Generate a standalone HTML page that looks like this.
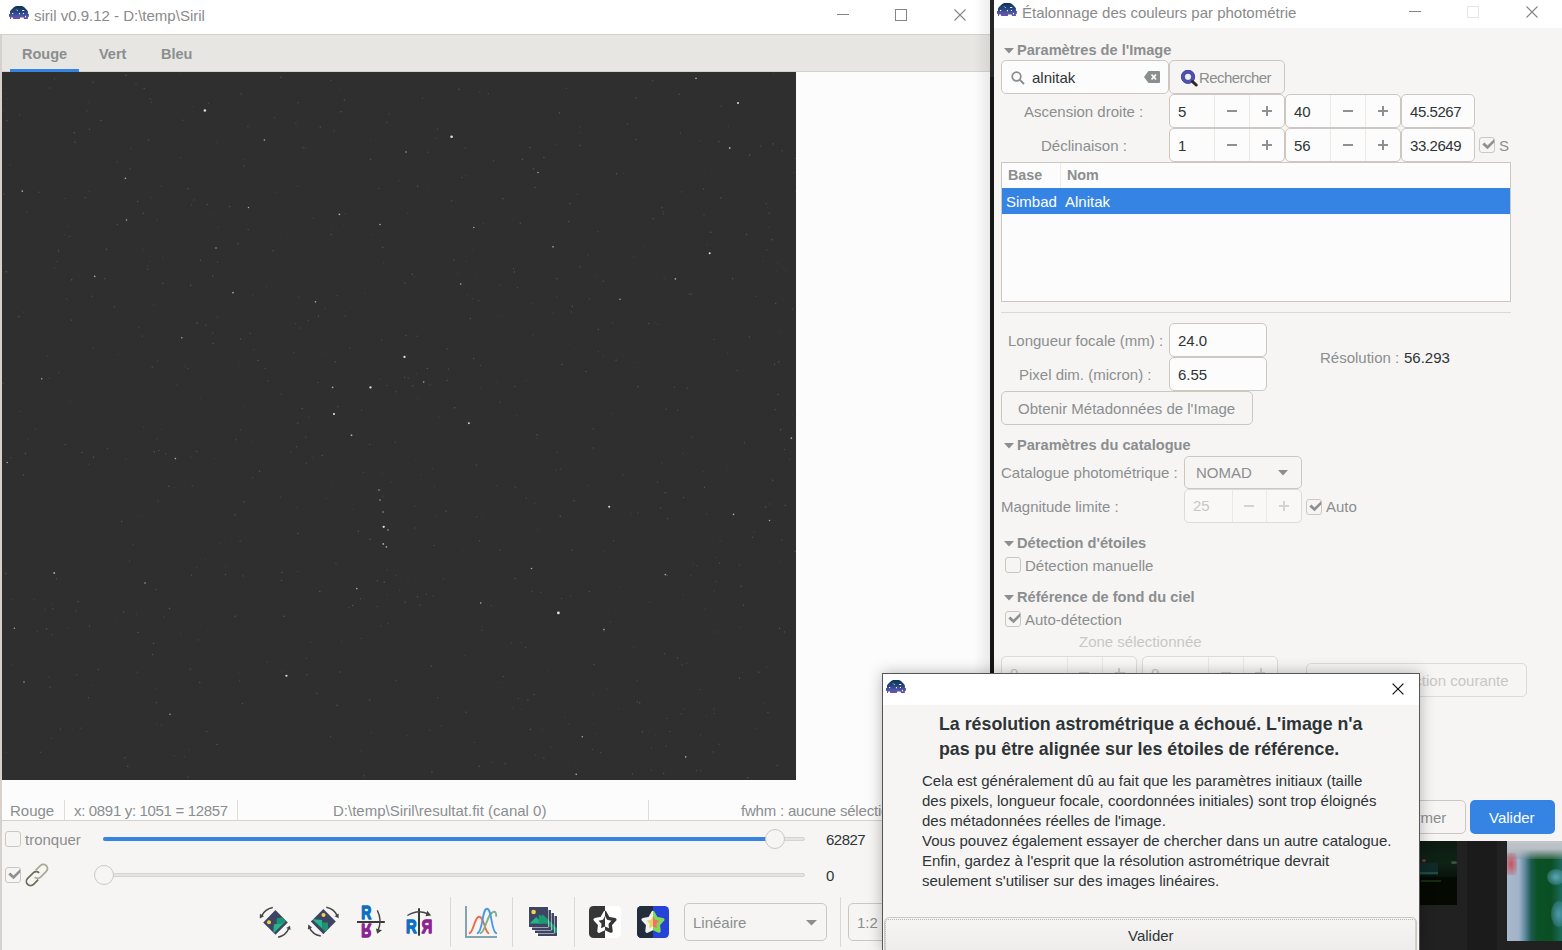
<!DOCTYPE html>
<html><head><meta charset="utf-8">
<style>
*{box-sizing:border-box;margin:0;padding:0}
html,body{width:1562px;height:950px;overflow:hidden;background:#202020;font-family:"Liberation Sans",sans-serif;font-size:15px;color:#2e3436}
.a{position:absolute}
.t{position:absolute;white-space:pre;line-height:1}
.g{color:#8b8e8f}
.b{font-weight:bold}
.ent{position:absolute;background:#fcfcfc;border:1px solid #cdc7c2;border-radius:5px}
.btn{position:absolute;background:#f6f5f4;border:1px solid #cdc7c2;border-radius:5px}
.vl{position:absolute;width:1px;background:#e4e1de}
.cb{position:absolute;width:16px;height:16px;border:1px solid #cdc7c2;border-radius:3px;background:#f6f5f4}
</style></head><body>
<svg width="0" height="0" style="position:absolute"><defs>
<linearGradient id="lg" x1="0" y1="0" x2="0" y2="1"><stop offset="0" stop-color="#073552"/><stop offset="0.45" stop-color="#27427f"/><stop offset="0.78" stop-color="#4a59a8"/><stop offset="1" stop-color="#7a4aa6"/></linearGradient>
<symbol id="logo" viewBox="0 0 20 14"><path d="M7.2 0.9H13L15 2.1L17.5 4.5L18.9 6.3V8.8L19.9 9.2V11.8L18.9 12V13.9H15L14.6 12.6H11L10.9 13.9H4.2L3.9 12.6H2.1L2 13.9H1V12L0 11.8V9.2L1 8.8V6.3L2.5 4.5L5.1 2.1Z" fill="url(#lg)"/>
<path d="M7.3 4.6Q7.9 5.5 8.6 5.6" stroke="#fff" stroke-width="0.9" fill="none"/><rect x="13.2" y="5" width="2" height="1" fill="#fff"/><rect x="3" y="8" width="1.2" height="1.1" fill="#fff"/><rect x="9.9" y="8" width="1" height="1.3" fill="#fff"/><rect x="13.9" y="8" width="1.1" height="1" fill="#fff"/><ellipse cx="16.5" cy="11.6" rx="0.55" ry="0.9" fill="#fff"/></symbol>
</defs></svg>

<!-- MAIN WINDOW -->
<div id="main" class="a" style="left:0;top:0;width:990px;height:950px;background:#f6f5f4;overflow:hidden">
  <div class="a" style="left:0;top:0;width:990px;height:34px;background:#fff"></div>
  <div class="a" style="left:0;top:34px;width:990px;height:1px;background:#d6d1cd"></div>
  <div class="a" style="left:0;top:35px;width:2px;height:915px;background:#d6d1cd"></div>
  <svg class="a" style="left:9px;top:5px" width="20" height="14"><use href="#logo"/></svg>
  <div class="t g" style="left:34px;top:8px;font-size:15px;color:#8a8a8a">siril v0.9.12 - D:\temp\Siril</div>
  <!-- window controls -->
  <div class="a" style="left:837px;top:14px;width:12px;height:1px;background:#858585"></div>
  <div class="a" style="left:895px;top:9px;width:12px;height:12px;border:1px solid #858585"></div>
  <svg class="a" style="left:954px;top:9px" width="12" height="12"><path d="M0.5 0.5L11.5 11.5M11.5 0.5L0.5 11.5" stroke="#858585" stroke-width="1.1"/></svg>
  <!-- tab bar -->
  <div class="a" style="left:2px;top:35px;width:988px;height:37px;background:#e8e6e3"></div>
  <div class="t b g" style="left:22px;top:47px;font-size:14.5px">Rouge</div>
  <div class="t b g" style="left:99px;top:47px;font-size:14.5px">Vert</div>
  <div class="t b g" style="left:161px;top:47px;font-size:14.5px">Bleu</div>
  <div class="a" style="left:2px;top:71px;width:988px;height:1px;background:#d6d1cd"></div>
  <div class="a" style="left:10px;top:69px;width:69px;height:3px;background:#3584e4"></div>
  <!-- image area -->
  <div class="a" style="left:2px;top:72px;width:988px;height:748px;background:#fcfcfc"></div>
  <div id="img" class="a" style="left:2px;top:72px;width:794px;height:708px;background:#2f2f2f"></div>
  <svg class="a" style="left:2px;top:72px" width="794" height="708"><circle cx="188.9" cy="385.3" r="0.7" fill="#fff" opacity="0.11"/><circle cx="479.5" cy="443.0" r="0.7" fill="#fff" opacity="0.06"/><circle cx="10.5" cy="592.9" r="0.7" fill="#fff" opacity="0.09"/><circle cx="186.1" cy="704.9" r="0.7" fill="#fff" opacity="0.13"/><circle cx="664.2" cy="337.3" r="0.7" fill="#fff" opacity="0.15"/><circle cx="119.6" cy="449.5" r="0.7" fill="#fff" opacity="0.19"/><circle cx="415.4" cy="524.8" r="0.7" fill="#fff" opacity="0.16"/><circle cx="50.8" cy="536.8" r="0.7" fill="#fff" opacity="0.14"/><circle cx="239.2" cy="22.0" r="0.7" fill="#fff" opacity="0.19"/><circle cx="375.4" cy="508.9" r="0.7" fill="#fff" opacity="0.19"/><circle cx="567.0" cy="652.1" r="0.7" fill="#fff" opacity="0.11"/><circle cx="635.9" cy="314.8" r="0.7" fill="#fff" opacity="0.20"/><circle cx="697.8" cy="69.0" r="0.7" fill="#fff" opacity="0.07"/><circle cx="172.3" cy="683.6" r="0.7" fill="#fff" opacity="0.12"/><circle cx="497.6" cy="213.1" r="0.7" fill="#fff" opacity="0.13"/><circle cx="306.4" cy="248.4" r="0.7" fill="#fff" opacity="0.14"/><circle cx="463.9" cy="640.2" r="0.7" fill="#fff" opacity="0.16"/><circle cx="737.6" cy="606.3" r="0.7" fill="#fff" opacity="0.21"/><circle cx="533.0" cy="115.5" r="0.7" fill="#fff" opacity="0.19"/><circle cx="765.9" cy="640.5" r="0.7" fill="#fff" opacity="0.14"/><circle cx="566.8" cy="149.5" r="0.7" fill="#fff" opacity="0.18"/><circle cx="455.4" cy="201.7" r="0.7" fill="#fff" opacity="0.06"/><circle cx="678.0" cy="700.8" r="0.7" fill="#fff" opacity="0.06"/><circle cx="635.7" cy="290.6" r="0.7" fill="#fff" opacity="0.07"/><circle cx="233.3" cy="544.3" r="0.7" fill="#fff" opacity="0.19"/><circle cx="35.1" cy="435.1" r="0.7" fill="#fff" opacity="0.05"/><circle cx="570.4" cy="234.3" r="0.7" fill="#fff" opacity="0.19"/><circle cx="778.6" cy="357.8" r="0.7" fill="#fff" opacity="0.21"/><circle cx="245.9" cy="54.5" r="0.7" fill="#fff" opacity="0.14"/><circle cx="24.9" cy="139.7" r="0.7" fill="#fff" opacity="0.11"/><circle cx="484.7" cy="110.6" r="0.7" fill="#fff" opacity="0.05"/><circle cx="689.0" cy="222.2" r="0.7" fill="#fff" opacity="0.20"/><circle cx="711.9" cy="267.5" r="0.7" fill="#fff" opacity="0.12"/><circle cx="412.9" cy="455.9" r="0.7" fill="#fff" opacity="0.14"/><circle cx="444.1" cy="439.0" r="0.7" fill="#fff" opacity="0.20"/><circle cx="402.6" cy="305.3" r="0.7" fill="#fff" opacity="0.16"/><circle cx="188.7" cy="213.2" r="0.7" fill="#fff" opacity="0.20"/><circle cx="413.8" cy="388.3" r="0.7" fill="#fff" opacity="0.05"/><circle cx="329.7" cy="410.6" r="0.7" fill="#fff" opacity="0.05"/><circle cx="488.9" cy="447.6" r="0.7" fill="#fff" opacity="0.06"/><circle cx="498.1" cy="330.1" r="0.7" fill="#fff" opacity="0.16"/><circle cx="279.9" cy="500.5" r="0.7" fill="#fff" opacity="0.17"/><circle cx="17.6" cy="42.9" r="0.7" fill="#fff" opacity="0.16"/><circle cx="764.9" cy="177.8" r="0.7" fill="#fff" opacity="0.12"/><circle cx="470.6" cy="226.6" r="0.7" fill="#fff" opacity="0.11"/><circle cx="248.3" cy="261.4" r="0.7" fill="#fff" opacity="0.14"/><circle cx="238.5" cy="267.0" r="0.7" fill="#fff" opacity="0.17"/><circle cx="21.4" cy="403.0" r="0.7" fill="#fff" opacity="0.17"/><circle cx="246.2" cy="157.6" r="0.7" fill="#fff" opacity="0.18"/><circle cx="189.5" cy="132.7" r="0.7" fill="#fff" opacity="0.12"/><circle cx="554.3" cy="72.1" r="0.7" fill="#fff" opacity="0.10"/><circle cx="265.0" cy="590.1" r="0.7" fill="#fff" opacity="0.12"/><circle cx="679.3" cy="119.9" r="0.7" fill="#fff" opacity="0.10"/><circle cx="516.3" cy="626.5" r="0.7" fill="#fff" opacity="0.12"/><circle cx="178.7" cy="85.6" r="0.7" fill="#fff" opacity="0.13"/><circle cx="151.5" cy="571.2" r="0.7" fill="#fff" opacity="0.19"/><circle cx="145.8" cy="197.2" r="0.7" fill="#fff" opacity="0.18"/><circle cx="509.7" cy="570.8" r="0.7" fill="#fff" opacity="0.10"/><circle cx="103.0" cy="206.7" r="0.7" fill="#fff" opacity="0.17"/><circle cx="215.3" cy="245.2" r="0.7" fill="#fff" opacity="0.11"/><circle cx="333.3" cy="289.9" r="0.7" fill="#fff" opacity="0.20"/><circle cx="123.9" cy="3.3" r="0.7" fill="#fff" opacity="0.20"/><circle cx="698.7" cy="698.7" r="0.7" fill="#fff" opacity="0.12"/><circle cx="754.4" cy="656.6" r="0.7" fill="#fff" opacity="0.08"/><circle cx="591.9" cy="592.4" r="0.7" fill="#fff" opacity="0.16"/><circle cx="412.1" cy="204.6" r="0.7" fill="#fff" opacity="0.10"/><circle cx="180.6" cy="48.2" r="0.7" fill="#fff" opacity="0.14"/><circle cx="227.9" cy="573.6" r="0.7" fill="#fff" opacity="0.05"/><circle cx="717.5" cy="491.1" r="0.7" fill="#fff" opacity="0.20"/><circle cx="711.9" cy="637.0" r="0.7" fill="#fff" opacity="0.14"/><circle cx="10.4" cy="527.7" r="0.7" fill="#fff" opacity="0.08"/><circle cx="238.1" cy="469.3" r="0.7" fill="#fff" opacity="0.13"/><circle cx="328.5" cy="664.8" r="0.7" fill="#fff" opacity="0.15"/><circle cx="271.0" cy="178.8" r="0.7" fill="#fff" opacity="0.19"/><circle cx="378.9" cy="553.9" r="0.7" fill="#fff" opacity="0.10"/><circle cx="156.7" cy="378.5" r="0.7" fill="#fff" opacity="0.18"/><circle cx="136.0" cy="560.5" r="0.7" fill="#fff" opacity="0.20"/><circle cx="640.0" cy="583.0" r="0.7" fill="#fff" opacity="0.05"/><circle cx="499.1" cy="610.7" r="0.7" fill="#fff" opacity="0.05"/><circle cx="215.5" cy="190.2" r="0.7" fill="#fff" opacity="0.13"/><circle cx="335.8" cy="334.8" r="0.7" fill="#fff" opacity="0.17"/><circle cx="1.4" cy="38.8" r="0.7" fill="#fff" opacity="0.07"/><circle cx="99.0" cy="48.4" r="0.7" fill="#fff" opacity="0.20"/><circle cx="678.4" cy="61.0" r="0.7" fill="#fff" opacity="0.13"/><circle cx="250.8" cy="222.7" r="0.7" fill="#fff" opacity="0.10"/><circle cx="513.6" cy="415.3" r="0.7" fill="#fff" opacity="0.11"/><circle cx="151.7" cy="232.8" r="0.7" fill="#fff" opacity="0.07"/><circle cx="441.1" cy="507.0" r="0.7" fill="#fff" opacity="0.11"/><circle cx="63.4" cy="126.4" r="0.7" fill="#fff" opacity="0.11"/><circle cx="479.9" cy="554.1" r="0.7" fill="#fff" opacity="0.11"/><circle cx="636.1" cy="441.0" r="0.7" fill="#fff" opacity="0.12"/><circle cx="295.7" cy="351.3" r="0.7" fill="#fff" opacity="0.16"/><circle cx="333.9" cy="491.4" r="0.7" fill="#fff" opacity="0.12"/><circle cx="194.6" cy="379.4" r="0.7" fill="#fff" opacity="0.16"/><circle cx="56.8" cy="300.8" r="0.7" fill="#fff" opacity="0.11"/><circle cx="698.5" cy="663.0" r="0.7" fill="#fff" opacity="0.11"/><circle cx="712.9" cy="560.0" r="0.7" fill="#fff" opacity="0.09"/><circle cx="368.5" cy="87.2" r="0.7" fill="#fff" opacity="0.18"/><circle cx="525.9" cy="628.2" r="0.7" fill="#fff" opacity="0.17"/><circle cx="530.0" cy="519.5" r="0.7" fill="#fff" opacity="0.14"/><circle cx="81.9" cy="416.1" r="0.7" fill="#fff" opacity="0.05"/><circle cx="114.0" cy="548.2" r="0.7" fill="#fff" opacity="0.05"/><circle cx="72.9" cy="70.3" r="0.7" fill="#fff" opacity="0.19"/><circle cx="142.2" cy="16.6" r="0.7" fill="#fff" opacity="0.19"/><circle cx="96.3" cy="597.5" r="0.7" fill="#fff" opacity="0.16"/><circle cx="663.9" cy="674.3" r="0.7" fill="#fff" opacity="0.14"/><circle cx="634.2" cy="25.7" r="0.7" fill="#fff" opacity="0.17"/><circle cx="406.0" cy="506.3" r="0.7" fill="#fff" opacity="0.07"/><circle cx="594.7" cy="661.7" r="0.7" fill="#fff" opacity="0.06"/><circle cx="257.5" cy="399.3" r="0.7" fill="#fff" opacity="0.18"/><circle cx="192.2" cy="127.3" r="0.7" fill="#fff" opacity="0.09"/><circle cx="489.1" cy="533.5" r="0.7" fill="#fff" opacity="0.11"/><circle cx="291.8" cy="280.8" r="0.7" fill="#fff" opacity="0.10"/><circle cx="332.1" cy="58.9" r="0.7" fill="#fff" opacity="0.13"/><circle cx="772.6" cy="292.3" r="0.7" fill="#fff" opacity="0.17"/><circle cx="127.5" cy="489.1" r="0.7" fill="#fff" opacity="0.17"/><circle cx="535.0" cy="366.1" r="0.7" fill="#fff" opacity="0.13"/><circle cx="510.5" cy="635.4" r="0.7" fill="#fff" opacity="0.07"/><circle cx="76.1" cy="529.7" r="0.7" fill="#fff" opacity="0.20"/><circle cx="410.7" cy="313.7" r="0.7" fill="#fff" opacity="0.16"/><circle cx="147.8" cy="189.3" r="0.7" fill="#fff" opacity="0.08"/><circle cx="465.0" cy="222.9" r="0.7" fill="#fff" opacity="0.08"/><circle cx="548.8" cy="675.0" r="0.7" fill="#fff" opacity="0.10"/><circle cx="560.0" cy="292.5" r="0.7" fill="#fff" opacity="0.19"/><circle cx="464.2" cy="189.2" r="0.7" fill="#fff" opacity="0.08"/><circle cx="18.4" cy="339.5" r="0.7" fill="#fff" opacity="0.11"/><circle cx="136.8" cy="255.2" r="0.7" fill="#fff" opacity="0.10"/><circle cx="614.7" cy="101.7" r="0.7" fill="#fff" opacity="0.21"/><circle cx="380.8" cy="424.1" r="0.7" fill="#fff" opacity="0.13"/><circle cx="662.7" cy="581.7" r="0.7" fill="#fff" opacity="0.14"/><circle cx="382.2" cy="510.3" r="0.7" fill="#fff" opacity="0.19"/><circle cx="317.8" cy="519.4" r="0.7" fill="#fff" opacity="0.20"/><circle cx="371.1" cy="162.6" r="0.7" fill="#fff" opacity="0.08"/><circle cx="569.8" cy="478.1" r="0.7" fill="#fff" opacity="0.20"/><circle cx="678.0" cy="171.4" r="0.7" fill="#fff" opacity="0.08"/><circle cx="205.3" cy="132.5" r="0.7" fill="#fff" opacity="0.16"/><circle cx="681.7" cy="637.0" r="0.7" fill="#fff" opacity="0.09"/><circle cx="686.9" cy="221.9" r="0.7" fill="#fff" opacity="0.11"/><circle cx="578.8" cy="60.8" r="0.7" fill="#fff" opacity="0.07"/><circle cx="662.1" cy="206.6" r="0.7" fill="#fff" opacity="0.11"/><circle cx="460.8" cy="478.3" r="0.7" fill="#fff" opacity="0.05"/><circle cx="265.8" cy="308.8" r="0.7" fill="#fff" opacity="0.13"/><circle cx="166.8" cy="414.3" r="0.7" fill="#fff" opacity="0.20"/><circle cx="310.4" cy="385.4" r="0.7" fill="#fff" opacity="0.07"/><circle cx="218.2" cy="471.1" r="0.7" fill="#fff" opacity="0.07"/><circle cx="704.4" cy="643.4" r="0.7" fill="#fff" opacity="0.07"/><circle cx="747.4" cy="265.0" r="0.7" fill="#fff" opacity="0.17"/><circle cx="601.3" cy="209.2" r="0.7" fill="#fff" opacity="0.16"/><circle cx="519.3" cy="570.7" r="0.7" fill="#fff" opacity="0.09"/><circle cx="598.8" cy="680.6" r="0.7" fill="#fff" opacity="0.16"/><circle cx="425.7" cy="80.2" r="0.7" fill="#fff" opacity="0.13"/><circle cx="279.6" cy="508.4" r="0.7" fill="#fff" opacity="0.16"/><circle cx="449.7" cy="128.8" r="0.7" fill="#fff" opacity="0.15"/><circle cx="500.9" cy="126.8" r="0.7" fill="#fff" opacity="0.19"/><circle cx="520.4" cy="87.2" r="0.7" fill="#fff" opacity="0.20"/><circle cx="112.3" cy="234.7" r="0.7" fill="#fff" opacity="0.16"/><circle cx="474.4" cy="392.9" r="0.7" fill="#fff" opacity="0.15"/><circle cx="363.4" cy="221.2" r="0.7" fill="#fff" opacity="0.08"/><circle cx="54.5" cy="506.8" r="0.7" fill="#fff" opacity="0.17"/><circle cx="431.2" cy="523.7" r="0.7" fill="#fff" opacity="0.11"/><circle cx="211.1" cy="271.4" r="0.7" fill="#fff" opacity="0.19"/><circle cx="33.4" cy="357.3" r="0.7" fill="#fff" opacity="0.09"/><circle cx="610.5" cy="250.7" r="0.7" fill="#fff" opacity="0.10"/><circle cx="320.3" cy="383.4" r="0.7" fill="#fff" opacity="0.17"/><circle cx="280.2" cy="599.6" r="0.7" fill="#fff" opacity="0.07"/><circle cx="214.8" cy="70.6" r="0.7" fill="#fff" opacity="0.07"/><circle cx="618.5" cy="514.9" r="0.7" fill="#fff" opacity="0.08"/><circle cx="150.2" cy="295.0" r="0.7" fill="#fff" opacity="0.17"/><circle cx="647.7" cy="530.1" r="0.7" fill="#fff" opacity="0.14"/><circle cx="116.3" cy="282.1" r="0.7" fill="#fff" opacity="0.08"/><circle cx="418.9" cy="402.4" r="0.7" fill="#fff" opacity="0.08"/><circle cx="198.6" cy="553.4" r="0.7" fill="#fff" opacity="0.05"/><circle cx="637.7" cy="631.0" r="0.7" fill="#fff" opacity="0.20"/><circle cx="304.2" cy="391.2" r="0.7" fill="#fff" opacity="0.14"/><circle cx="503.1" cy="691.7" r="0.7" fill="#fff" opacity="0.16"/><circle cx="237.7" cy="608.9" r="0.7" fill="#fff" opacity="0.13"/><circle cx="477.5" cy="514.6" r="0.7" fill="#fff" opacity="0.05"/><circle cx="611.7" cy="468.7" r="0.7" fill="#fff" opacity="0.13"/><circle cx="415.8" cy="326.1" r="0.7" fill="#fff" opacity="0.08"/><circle cx="420.5" cy="26.2" r="0.7" fill="#fff" opacity="0.13"/><circle cx="512.9" cy="314.5" r="0.7" fill="#fff" opacity="0.14"/><circle cx="761.5" cy="631.6" r="0.7" fill="#fff" opacity="0.07"/><circle cx="629.1" cy="441.3" r="0.7" fill="#fff" opacity="0.05"/><circle cx="285.8" cy="165.3" r="0.7" fill="#fff" opacity="0.06"/><circle cx="427.9" cy="658.3" r="0.7" fill="#fff" opacity="0.10"/><circle cx="691.2" cy="491.8" r="0.7" fill="#fff" opacity="0.07"/><circle cx="681.5" cy="425.6" r="0.7" fill="#fff" opacity="0.20"/><circle cx="568.5" cy="523.7" r="0.7" fill="#fff" opacity="0.10"/><circle cx="640.5" cy="659.7" r="0.7" fill="#fff" opacity="0.19"/><circle cx="347.0" cy="535.8" r="0.7" fill="#fff" opacity="0.13"/><circle cx="86.6" cy="30.2" r="0.7" fill="#fff" opacity="0.06"/><circle cx="159.0" cy="113.9" r="0.7" fill="#fff" opacity="0.13"/><circle cx="555.2" cy="380.5" r="0.7" fill="#fff" opacity="0.11"/><circle cx="515.5" cy="215.7" r="0.7" fill="#fff" opacity="0.13"/><circle cx="601.1" cy="284.2" r="0.7" fill="#fff" opacity="0.08"/><circle cx="714.1" cy="509.5" r="0.7" fill="#fff" opacity="0.11"/><circle cx="294.6" cy="374.8" r="0.7" fill="#fff" opacity="0.14"/><circle cx="177.7" cy="1.9" r="0.7" fill="#fff" opacity="0.08"/><circle cx="621.8" cy="101.6" r="0.7" fill="#fff" opacity="0.12"/><circle cx="155.1" cy="148.2" r="0.7" fill="#fff" opacity="0.08"/><circle cx="320.6" cy="119.1" r="0.7" fill="#fff" opacity="0.05"/><circle cx="87.4" cy="119.1" r="0.7" fill="#fff" opacity="0.13"/><circle cx="47.4" cy="15.9" r="0.7" fill="#fff" opacity="0.12"/><circle cx="323.7" cy="498.0" r="0.7" fill="#fff" opacity="0.05"/><circle cx="320.2" cy="280.8" r="0.7" fill="#fff" opacity="0.05"/><circle cx="766.6" cy="155.0" r="0.7" fill="#fff" opacity="0.07"/><circle cx="376.8" cy="116.6" r="0.7" fill="#fff" opacity="0.15"/><circle cx="275.0" cy="87.8" r="0.7" fill="#fff" opacity="0.05"/><circle cx="577.8" cy="194.8" r="0.7" fill="#fff" opacity="0.17"/><circle cx="369.5" cy="660.5" r="0.7" fill="#fff" opacity="0.10"/><circle cx="198.5" cy="188.2" r="0.7" fill="#fff" opacity="0.18"/><circle cx="499.5" cy="244.1" r="0.7" fill="#fff" opacity="0.07"/><circle cx="541.8" cy="686.2" r="0.7" fill="#fff" opacity="0.14"/><circle cx="2.9" cy="21.5" r="0.7" fill="#fff" opacity="0.06"/><circle cx="135.2" cy="25.9" r="0.7" fill="#fff" opacity="0.05"/><circle cx="519.5" cy="637.4" r="0.7" fill="#fff" opacity="0.08"/><circle cx="773.2" cy="337.6" r="0.7" fill="#fff" opacity="0.18"/><circle cx="728.4" cy="665.6" r="0.7" fill="#fff" opacity="0.05"/><circle cx="242.0" cy="429.7" r="0.7" fill="#fff" opacity="0.20"/><circle cx="69.7" cy="207.8" r="0.7" fill="#fff" opacity="0.19"/><circle cx="91.1" cy="276.0" r="0.7" fill="#fff" opacity="0.10"/><circle cx="540.0" cy="657.4" r="0.7" fill="#fff" opacity="0.08"/><circle cx="587.4" cy="519.6" r="0.7" fill="#fff" opacity="0.19"/><circle cx="439.3" cy="653.8" r="0.7" fill="#fff" opacity="0.11"/><circle cx="329.3" cy="162.4" r="0.7" fill="#fff" opacity="0.17"/><circle cx="381.6" cy="190.8" r="0.7" fill="#fff" opacity="0.08"/><circle cx="572.2" cy="428.8" r="0.7" fill="#fff" opacity="0.16"/><circle cx="307.1" cy="344.9" r="0.7" fill="#fff" opacity="0.07"/><circle cx="564.3" cy="16.3" r="0.7" fill="#fff" opacity="0.13"/><circle cx="602.2" cy="479.6" r="0.7" fill="#fff" opacity="0.07"/><circle cx="188.3" cy="597.3" r="0.7" fill="#fff" opacity="0.15"/><circle cx="697.6" cy="617.6" r="0.7" fill="#fff" opacity="0.12"/><circle cx="712.1" cy="518.9" r="0.7" fill="#fff" opacity="0.10"/><circle cx="293.9" cy="51.0" r="0.7" fill="#fff" opacity="0.11"/><circle cx="758.8" cy="74.3" r="0.7" fill="#fff" opacity="0.14"/><circle cx="87.4" cy="57.3" r="0.7" fill="#fff" opacity="0.16"/><circle cx="191.1" cy="34.6" r="0.7" fill="#fff" opacity="0.07"/><circle cx="511.8" cy="414.6" r="0.7" fill="#fff" opacity="0.05"/><circle cx="182.6" cy="684.8" r="0.7" fill="#fff" opacity="0.08"/><circle cx="446.6" cy="297.1" r="0.7" fill="#fff" opacity="0.17"/><circle cx="479.9" cy="558.4" r="0.7" fill="#fff" opacity="0.13"/><circle cx="149.4" cy="125.7" r="0.7" fill="#fff" opacity="0.06"/><circle cx="655.5" cy="79.7" r="0.7" fill="#fff" opacity="0.05"/><circle cx="767.3" cy="141.1" r="0.7" fill="#fff" opacity="0.19"/><circle cx="68.1" cy="329.4" r="0.7" fill="#fff" opacity="0.08"/><circle cx="658.6" cy="435.7" r="0.7" fill="#fff" opacity="0.15"/><circle cx="604.6" cy="617.2" r="0.7" fill="#fff" opacity="0.10"/><circle cx="478.9" cy="315.5" r="0.7" fill="#fff" opacity="0.07"/><circle cx="663.3" cy="420.8" r="0.7" fill="#fff" opacity="0.18"/><circle cx="163.6" cy="381.7" r="0.7" fill="#fff" opacity="0.13"/><circle cx="578.0" cy="54.7" r="0.7" fill="#fff" opacity="0.10"/><circle cx="384.7" cy="50.6" r="0.7" fill="#fff" opacity="0.14"/><circle cx="583.8" cy="299.4" r="0.7" fill="#fff" opacity="0.16"/><circle cx="481.1" cy="151.6" r="0.7" fill="#fff" opacity="0.10"/><circle cx="790.6" cy="237.3" r="0.7" fill="#fff" opacity="0.12"/><circle cx="66.8" cy="154.3" r="0.7" fill="#fff" opacity="0.07"/><circle cx="739.2" cy="514.3" r="0.7" fill="#fff" opacity="0.19"/><circle cx="783.3" cy="433.4" r="0.7" fill="#fff" opacity="0.20"/><circle cx="425.4" cy="296.5" r="0.7" fill="#fff" opacity="0.20"/><circle cx="717.1" cy="672.3" r="0.7" fill="#fff" opacity="0.13"/><circle cx="614.1" cy="288.1" r="0.7" fill="#fff" opacity="0.21"/><circle cx="730.7" cy="206.8" r="0.7" fill="#fff" opacity="0.20"/><circle cx="146.6" cy="67.9" r="0.7" fill="#fff" opacity="0.17"/><circle cx="233.7" cy="367.8" r="0.7" fill="#fff" opacity="0.15"/><circle cx="32.2" cy="527.6" r="0.7" fill="#fff" opacity="0.09"/><circle cx="343.3" cy="244.1" r="0.7" fill="#fff" opacity="0.17"/><circle cx="593.0" cy="203.4" r="0.7" fill="#fff" opacity="0.07"/><circle cx="237.7" cy="291.0" r="0.7" fill="#fff" opacity="0.06"/><circle cx="121.6" cy="540.0" r="0.7" fill="#fff" opacity="0.16"/><circle cx="775.3" cy="693.6" r="0.7" fill="#fff" opacity="0.19"/><circle cx="295.8" cy="114.2" r="0.7" fill="#fff" opacity="0.10"/><circle cx="367.7" cy="372.4" r="0.7" fill="#fff" opacity="0.14"/><circle cx="285.6" cy="603.7" r="0.7" fill="#fff" opacity="0.10"/><circle cx="367.7" cy="627.9" r="0.7" fill="#fff" opacity="0.18"/><circle cx="236.1" cy="171.8" r="0.7" fill="#fff" opacity="0.18"/><circle cx="8.0" cy="93.1" r="0.7" fill="#fff" opacity="0.13"/><circle cx="425.5" cy="117.3" r="0.7" fill="#fff" opacity="0.05"/><circle cx="161.9" cy="545.2" r="0.7" fill="#fff" opacity="0.13"/><circle cx="777.6" cy="556.2" r="0.7" fill="#fff" opacity="0.20"/><circle cx="27.9" cy="131.0" r="0.7" fill="#fff" opacity="0.05"/><circle cx="343.3" cy="239.5" r="0.7" fill="#fff" opacity="0.05"/><circle cx="433.5" cy="66.4" r="0.7" fill="#fff" opacity="0.10"/><circle cx="196.3" cy="567.9" r="0.7" fill="#fff" opacity="0.11"/><circle cx="206.7" cy="31.2" r="0.7" fill="#fff" opacity="0.12"/><circle cx="498.2" cy="478.1" r="0.7" fill="#fff" opacity="0.20"/><circle cx="642.0" cy="175.1" r="0.7" fill="#fff" opacity="0.07"/><circle cx="602.1" cy="559.0" r="0.7" fill="#fff" opacity="0.13"/><circle cx="659.8" cy="390.7" r="0.7" fill="#fff" opacity="0.10"/><circle cx="134.0" cy="12.1" r="0.7" fill="#fff" opacity="0.15"/><circle cx="712.2" cy="641.6" r="0.7" fill="#fff" opacity="0.13"/><circle cx="528.4" cy="657.5" r="0.7" fill="#fff" opacity="0.18"/><circle cx="478.5" cy="293.4" r="0.7" fill="#fff" opacity="0.13"/><circle cx="135.6" cy="129.5" r="0.7" fill="#fff" opacity="0.16"/><circle cx="787.7" cy="387.3" r="0.7" fill="#fff" opacity="0.11"/><circle cx="279.4" cy="322.1" r="0.7" fill="#fff" opacity="0.18"/><circle cx="359.3" cy="679.2" r="0.7" fill="#fff" opacity="0.07"/><circle cx="250.0" cy="369.6" r="0.7" fill="#fff" opacity="0.11"/><circle cx="675.7" cy="585.9" r="0.7" fill="#fff" opacity="0.20"/><circle cx="486.3" cy="21.7" r="0.7" fill="#fff" opacity="0.14"/><circle cx="436.5" cy="345.2" r="0.7" fill="#fff" opacity="0.10"/><circle cx="563.3" cy="645.4" r="0.7" fill="#fff" opacity="0.07"/><circle cx="530.9" cy="262.9" r="0.7" fill="#fff" opacity="0.13"/><circle cx="711.2" cy="679.9" r="0.7" fill="#fff" opacity="0.15"/><circle cx="154.9" cy="651.9" r="0.7" fill="#fff" opacity="0.08"/><circle cx="304.3" cy="586.3" r="0.7" fill="#fff" opacity="0.10"/><circle cx="215.1" cy="672.5" r="0.7" fill="#fff" opacity="0.20"/><circle cx="252.0" cy="277.9" r="0.7" fill="#fff" opacity="0.10"/><circle cx="104.4" cy="177.2" r="0.7" fill="#fff" opacity="0.20"/><circle cx="62.9" cy="162.7" r="0.7" fill="#fff" opacity="0.08"/><circle cx="63.1" cy="372.6" r="0.7" fill="#fff" opacity="0.17"/><circle cx="665.6" cy="446.8" r="0.7" fill="#fff" opacity="0.18"/><circle cx="4.3" cy="199.8" r="0.7" fill="#fff" opacity="0.20"/><circle cx="55.1" cy="189.5" r="0.7" fill="#fff" opacity="0.13"/><circle cx="212.7" cy="386.7" r="0.7" fill="#fff" opacity="0.05"/><circle cx="187.3" cy="678.0" r="0.7" fill="#fff" opacity="0.07"/><circle cx="719.0" cy="126.0" r="0.7" fill="#fff" opacity="0.21"/><circle cx="535.6" cy="458.0" r="0.7" fill="#fff" opacity="0.07"/><circle cx="43.3" cy="537.7" r="0.7" fill="#fff" opacity="0.08"/><circle cx="150.5" cy="582.5" r="0.7" fill="#fff" opacity="0.19"/><circle cx="38.7" cy="680.2" r="0.7" fill="#fff" opacity="0.13"/><circle cx="303.6" cy="75.8" r="0.7" fill="#fff" opacity="0.11"/><circle cx="784.1" cy="198.8" r="0.7" fill="#fff" opacity="0.07"/><circle cx="115.3" cy="89.9" r="0.7" fill="#fff" opacity="0.11"/><circle cx="726.5" cy="54.5" r="0.7" fill="#fff" opacity="0.08"/><circle cx="745.8" cy="705.8" r="0.7" fill="#fff" opacity="0.20"/><circle cx="195.3" cy="250.9" r="0.7" fill="#fff" opacity="0.20"/><circle cx="385.2" cy="498.0" r="0.7" fill="#fff" opacity="0.10"/><circle cx="16.9" cy="244.5" r="0.7" fill="#fff" opacity="0.17"/><circle cx="620.9" cy="402.8" r="0.7" fill="#fff" opacity="0.13"/><circle cx="427.3" cy="313.1" r="0.7" fill="#fff" opacity="0.13"/><circle cx="661.4" cy="141.9" r="0.7" fill="#fff" opacity="0.14"/><circle cx="740.6" cy="600.6" r="0.7" fill="#fff" opacity="0.08"/><circle cx="765.0" cy="594.8" r="0.7" fill="#fff" opacity="0.08"/><circle cx="211.1" cy="143.3" r="0.7" fill="#fff" opacity="0.05"/><circle cx="776.8" cy="289.8" r="0.7" fill="#fff" opacity="0.19"/><circle cx="91.0" cy="9.9" r="0.7" fill="#fff" opacity="0.19"/><circle cx="630.4" cy="702.0" r="0.7" fill="#fff" opacity="0.16"/><circle cx="417.0" cy="542.4" r="0.7" fill="#fff" opacity="0.06"/><circle cx="429.1" cy="312.4" r="0.7" fill="#fff" opacity="0.07"/><circle cx="476.7" cy="228.8" r="0.7" fill="#fff" opacity="0.13"/><circle cx="296.6" cy="225.2" r="0.7" fill="#fff" opacity="0.11"/><circle cx="477.2" cy="694.2" r="0.7" fill="#fff" opacity="0.20"/><circle cx="684.6" cy="591.3" r="0.7" fill="#fff" opacity="0.10"/><circle cx="775.5" cy="191.0" r="0.7" fill="#fff" opacity="0.07"/><circle cx="397.6" cy="518.4" r="0.7" fill="#fff" opacity="0.10"/><circle cx="512.4" cy="199.9" r="0.7" fill="#fff" opacity="0.20"/><circle cx="359.6" cy="338.3" r="0.7" fill="#fff" opacity="0.13"/><circle cx="694.7" cy="698.5" r="0.7" fill="#fff" opacity="0.13"/><circle cx="350.6" cy="437.4" r="0.7" fill="#fff" opacity="0.06"/><circle cx="337.8" cy="600.0" r="0.7" fill="#fff" opacity="0.17"/><circle cx="47.1" cy="605.0" r="0.7" fill="#fff" opacity="0.11"/><circle cx="779.1" cy="259.6" r="0.7" fill="#fff" opacity="0.08"/><circle cx="435.7" cy="625.8" r="0.7" fill="#fff" opacity="0.12"/><circle cx="688.8" cy="503.6" r="0.7" fill="#fff" opacity="0.11"/><circle cx="238.7" cy="357.8" r="0.7" fill="#fff" opacity="0.11"/><circle cx="295.8" cy="461.4" r="0.7" fill="#fff" opacity="0.19"/><circle cx="464.0" cy="103.5" r="0.7" fill="#fff" opacity="0.08"/><circle cx="294.5" cy="435.2" r="0.7" fill="#fff" opacity="0.07"/><circle cx="64.8" cy="227.0" r="0.7" fill="#fff" opacity="0.10"/><circle cx="23.4" cy="381.5" r="0.7" fill="#fff" opacity="0.20"/><circle cx="424.3" cy="522.1" r="0.7" fill="#fff" opacity="0.18"/><circle cx="665.1" cy="646.4" r="0.7" fill="#fff" opacity="0.12"/><circle cx="541.9" cy="85.5" r="0.7" fill="#fff" opacity="0.19"/><circle cx="300.3" cy="336.5" r="0.7" fill="#fff" opacity="0.19"/><circle cx="227.7" cy="134.5" r="0.7" fill="#fff" opacity="0.18"/><circle cx="475.5" cy="60.1" r="0.7" fill="#fff" opacity="0.05"/><circle cx="278.9" cy="5.3" r="0.7" fill="#fff" opacity="0.18"/><circle cx="145.8" cy="194.1" r="0.7" fill="#fff" opacity="0.11"/><circle cx="406.3" cy="306.1" r="0.7" fill="#fff" opacity="0.15"/><circle cx="523.9" cy="308.8" r="0.7" fill="#fff" opacity="0.07"/><circle cx="777.4" cy="489.4" r="0.7" fill="#fff" opacity="0.06"/><circle cx="350.7" cy="533.5" r="0.7" fill="#fff" opacity="0.21"/><circle cx="52.4" cy="6.7" r="0.7" fill="#fff" opacity="0.13"/><circle cx="335.1" cy="633.2" r="0.7" fill="#fff" opacity="0.18"/><circle cx="263.3" cy="296.5" r="0.7" fill="#fff" opacity="0.14"/><circle cx="702.0" cy="143.0" r="0.7" fill="#fff" opacity="0.11"/><circle cx="70.2" cy="454.0" r="0.7" fill="#fff" opacity="0.05"/><circle cx="742.4" cy="370.8" r="0.7" fill="#fff" opacity="0.14"/><circle cx="67.7" cy="164.4" r="0.7" fill="#fff" opacity="0.13"/><circle cx="680.7" cy="381.6" r="0.7" fill="#fff" opacity="0.10"/><circle cx="779.8" cy="468.3" r="0.7" fill="#fff" opacity="0.13"/><circle cx="160.7" cy="211.4" r="0.7" fill="#fff" opacity="0.19"/><circle cx="105.5" cy="376.4" r="0.7" fill="#fff" opacity="0.15"/><circle cx="281.8" cy="544.2" r="0.7" fill="#fff" opacity="0.20"/><circle cx="680.9" cy="522.5" r="0.7" fill="#fff" opacity="0.08"/><circle cx="47.5" cy="306.4" r="0.7" fill="#fff" opacity="0.10"/><circle cx="154.0" cy="616.9" r="0.7" fill="#fff" opacity="0.08"/><circle cx="653.3" cy="663.9" r="0.7" fill="#fff" opacity="0.07"/><circle cx="725.4" cy="281.2" r="0.7" fill="#fff" opacity="0.08"/><circle cx="148.1" cy="26.7" r="0.7" fill="#fff" opacity="0.13"/><circle cx="305.2" cy="602.8" r="0.7" fill="#fff" opacity="0.18"/><circle cx="45.3" cy="284.1" r="0.7" fill="#fff" opacity="0.11"/><circle cx="141.0" cy="177.5" r="0.7" fill="#fff" opacity="0.09"/><circle cx="551.1" cy="240.9" r="0.7" fill="#fff" opacity="0.07"/><circle cx="175.0" cy="313.1" r="0.7" fill="#fff" opacity="0.14"/><circle cx="194.9" cy="495.3" r="0.7" fill="#fff" opacity="0.08"/><circle cx="532.6" cy="431.4" r="0.7" fill="#fff" opacity="0.08"/><circle cx="596.3" cy="279.1" r="0.7" fill="#fff" opacity="0.14"/><circle cx="474.6" cy="444.7" r="0.7" fill="#fff" opacity="0.12"/><circle cx="44.5" cy="557.0" r="0.7" fill="#fff" opacity="0.19"/><circle cx="389.2" cy="409.9" r="0.7" fill="#fff" opacity="0.09"/><circle cx="713.5" cy="485.5" r="0.7" fill="#fff" opacity="0.08"/><circle cx="649.1" cy="698.2" r="0.7" fill="#fff" opacity="0.10"/><circle cx="790.4" cy="342.1" r="0.7" fill="#fff" opacity="0.08"/><circle cx="569.2" cy="239.9" r="0.7" fill="#fff" opacity="0.17"/><circle cx="463.3" cy="76.2" r="0.7" fill="#fff" opacity="0.13"/><circle cx="675.6" cy="338.3" r="0.7" fill="#fff" opacity="0.14"/><circle cx="685.3" cy="316.2" r="0.7" fill="#fff" opacity="0.13"/><circle cx="462.8" cy="583.3" r="0.7" fill="#fff" opacity="0.08"/><circle cx="74.3" cy="538.9" r="0.7" fill="#fff" opacity="0.14"/><circle cx="240.4" cy="631.6" r="0.7" fill="#fff" opacity="0.19"/><circle cx="429.9" cy="699.8" r="0.7" fill="#fff" opacity="0.19"/><circle cx="594.0" cy="206.2" r="0.7" fill="#fff" opacity="0.05"/><circle cx="538.8" cy="520.5" r="0.7" fill="#fff" opacity="0.10"/><circle cx="380.1" cy="401.6" r="0.7" fill="#fff" opacity="0.09"/><circle cx="553.9" cy="398.3" r="0.7" fill="#fff" opacity="0.11"/><circle cx="87.0" cy="392.2" r="0.7" fill="#fff" opacity="0.10"/><circle cx="575.6" cy="122.2" r="0.7" fill="#fff" opacity="0.11"/><circle cx="155.8" cy="289.1" r="0.7" fill="#fff" opacity="0.14"/><circle cx="84.9" cy="38.8" r="0.7" fill="#fff" opacity="0.13"/><circle cx="160.0" cy="357.6" r="0.7" fill="#fff" opacity="0.08"/><circle cx="80.0" cy="380.6" r="0.7" fill="#fff" opacity="0.20"/><circle cx="689.6" cy="365.0" r="0.7" fill="#fff" opacity="0.11"/><circle cx="52.5" cy="195.7" r="0.7" fill="#fff" opacity="0.10"/><circle cx="747.6" cy="83.0" r="0.7" fill="#fff" opacity="0.20"/><circle cx="378.5" cy="307.3" r="0.7" fill="#fff" opacity="0.09"/><circle cx="764.3" cy="131.7" r="0.7" fill="#fff" opacity="0.14"/><circle cx="405.5" cy="141.3" r="0.7" fill="#fff" opacity="0.08"/><circle cx="782.4" cy="559.9" r="0.7" fill="#fff" opacity="0.17"/><circle cx="716.9" cy="69.8" r="0.7" fill="#fff" opacity="0.16"/><circle cx="595.9" cy="159.6" r="0.7" fill="#fff" opacity="0.12"/><circle cx="773.7" cy="231.4" r="0.7" fill="#fff" opacity="0.17"/><circle cx="131.2" cy="472.4" r="0.7" fill="#fff" opacity="0.09"/><circle cx="404.0" cy="263.6" r="0.7" fill="#fff" opacity="0.19"/><circle cx="591.4" cy="356.9" r="0.7" fill="#fff" opacity="0.16"/><circle cx="339.6" cy="569.4" r="0.7" fill="#fff" opacity="0.09"/><circle cx="432.1" cy="414.6" r="0.7" fill="#fff" opacity="0.11"/><circle cx="37.0" cy="120.3" r="0.7" fill="#fff" opacity="0.15"/><circle cx="167.8" cy="536.8" r="0.7" fill="#fff" opacity="0.13"/><circle cx="756.8" cy="600.3" r="0.7" fill="#fff" opacity="0.17"/><circle cx="295.8" cy="30.8" r="0.7" fill="#fff" opacity="0.14"/><circle cx="592.1" cy="652.1" r="0.7" fill="#fff" opacity="0.08"/><circle cx="125.8" cy="694.2" r="0.7" fill="#fff" opacity="0.17"/><circle cx="384.8" cy="522.8" r="0.7" fill="#fff" opacity="0.07"/><circle cx="432.0" cy="473.4" r="0.7" fill="#fff" opacity="0.14"/><circle cx="128.0" cy="96.8" r="0.7" fill="#fff" opacity="0.15"/><circle cx="702.2" cy="97.8" r="0.7" fill="#fff" opacity="0.05"/><circle cx="65.8" cy="555.9" r="0.7" fill="#fff" opacity="0.11"/><circle cx="361.9" cy="703.8" r="0.7" fill="#fff" opacity="0.15"/><circle cx="209.1" cy="496.3" r="0.7" fill="#fff" opacity="0.05"/><circle cx="223.5" cy="494.6" r="0.7" fill="#fff" opacity="0.08"/><circle cx="25.9" cy="366.9" r="0.7" fill="#fff" opacity="0.10"/><circle cx="771.1" cy="71.9" r="0.7" fill="#fff" opacity="0.18"/><circle cx="308.5" cy="570.2" r="0.7" fill="#fff" opacity="0.12"/><circle cx="529.9" cy="231.2" r="0.7" fill="#fff" opacity="0.08"/><circle cx="359.2" cy="566.5" r="0.7" fill="#fff" opacity="0.10"/><circle cx="182.5" cy="294.4" r="0.7" fill="#fff" opacity="0.07"/><circle cx="250.7" cy="405.6" r="0.7" fill="#fff" opacity="0.14"/><circle cx="474.4" cy="205.3" r="0.7" fill="#fff" opacity="0.05"/><circle cx="21.0" cy="240.0" r="0.7" fill="#fff" opacity="0.08"/><circle cx="451.8" cy="187.9" r="0.7" fill="#fff" opacity="0.17"/><circle cx="477.5" cy="468.9" r="0.7" fill="#fff" opacity="0.17"/><circle cx="414.2" cy="302.0" r="0.7" fill="#fff" opacity="0.10"/><circle cx="50.0" cy="562.5" r="0.7" fill="#fff" opacity="0.13"/><circle cx="79.2" cy="656.1" r="0.7" fill="#fff" opacity="0.14"/><circle cx="495.1" cy="310.6" r="0.7" fill="#fff" opacity="0.07"/><circle cx="793.6" cy="119.1" r="0.7" fill="#fff" opacity="0.11"/><circle cx="793.5" cy="86.4" r="0.7" fill="#fff" opacity="0.13"/><circle cx="380.8" cy="175.3" r="0.7" fill="#fff" opacity="0.20"/><circle cx="328.9" cy="8.2" r="0.7" fill="#fff" opacity="0.13"/><circle cx="3.7" cy="501.6" r="0.7" fill="#fff" opacity="0.19"/><circle cx="719.1" cy="33.9" r="0.7" fill="#fff" opacity="0.16"/><circle cx="242.0" cy="334.6" r="0.7" fill="#fff" opacity="0.10"/><circle cx="242.2" cy="94.0" r="0.7" fill="#fff" opacity="0.15"/><circle cx="70.3" cy="682.6" r="0.7" fill="#fff" opacity="0.05"/><circle cx="765.5" cy="135.6" r="0.7" fill="#fff" opacity="0.06"/><circle cx="591.4" cy="375.9" r="0.7" fill="#fff" opacity="0.17"/><circle cx="403.7" cy="446.4" r="0.7" fill="#fff" opacity="0.06"/><circle cx="535.0" cy="362.8" r="0.7" fill="#fff" opacity="0.20"/><circle cx="4.9" cy="48.4" r="0.7" fill="#fff" opacity="0.16"/><circle cx="735.4" cy="298.6" r="0.7" fill="#fff" opacity="0.16"/><circle cx="445.1" cy="276.8" r="0.7" fill="#fff" opacity="0.13"/><circle cx="477.7" cy="20.4" r="0.7" fill="#fff" opacity="0.10"/><circle cx="586.0" cy="182.8" r="0.7" fill="#fff" opacity="0.13"/><circle cx="203.8" cy="253.2" r="0.7" fill="#fff" opacity="0.16"/><circle cx="590.5" cy="677.4" r="0.7" fill="#fff" opacity="0.13"/><circle cx="161.0" cy="238.5" r="0.7" fill="#fff" opacity="0.06"/><circle cx="190.2" cy="413.9" r="0.7" fill="#fff" opacity="0.14"/><circle cx="191.7" cy="128.6" r="0.7" fill="#fff" opacity="0.07"/><circle cx="141.8" cy="355.0" r="0.7" fill="#fff" opacity="0.09"/><circle cx="701.7" cy="399.9" r="0.7" fill="#fff" opacity="0.10"/><circle cx="342.3" cy="28.3" r="0.7" fill="#fff" opacity="0.17"/><circle cx="596.4" cy="257.5" r="0.7" fill="#fff" opacity="0.17"/><circle cx="216.3" cy="155.4" r="0.7" fill="#fff" opacity="0.08"/><circle cx="156.2" cy="428.9" r="0.7" fill="#fff" opacity="0.15"/><circle cx="577.8" cy="73.5" r="0.7" fill="#fff" opacity="0.17"/><circle cx="379.7" cy="268.0" r="0.7" fill="#fff" opacity="0.13"/><circle cx="343.6" cy="141.7" r="0.7" fill="#fff" opacity="0.11"/><circle cx="513.0" cy="506.4" r="0.7" fill="#fff" opacity="0.20"/><circle cx="154.3" cy="630.8" r="0.7" fill="#fff" opacity="0.18"/><circle cx="566.1" cy="693.5" r="0.7" fill="#fff" opacity="0.07"/><circle cx="616.6" cy="636.8" r="0.7" fill="#fff" opacity="0.07"/><circle cx="472.2" cy="670.5" r="0.7" fill="#fff" opacity="0.10"/><circle cx="679.1" cy="641.7" r="0.7" fill="#fff" opacity="0.12"/><circle cx="115.3" cy="152.6" r="0.7" fill="#fff" opacity="0.18"/><circle cx="335.2" cy="223.5" r="0.7" fill="#fff" opacity="0.12"/><circle cx="737.0" cy="179.8" r="0.7" fill="#fff" opacity="0.05"/><circle cx="753.7" cy="224.4" r="0.7" fill="#fff" opacity="0.11"/><circle cx="774.8" cy="199.6" r="0.7" fill="#fff" opacity="0.06"/><circle cx="704.8" cy="172.7" r="0.7" fill="#fff" opacity="0.08"/><circle cx="744.5" cy="162.4" r="0.7" fill="#fff" opacity="0.19"/><circle cx="264.5" cy="214.7" r="0.7" fill="#fff" opacity="0.08"/><circle cx="430.6" cy="396.6" r="0.7" fill="#fff" opacity="0.11"/><circle cx="402.9" cy="211.1" r="0.7" fill="#fff" opacity="0.19"/><circle cx="741.5" cy="533.2" r="0.7" fill="#fff" opacity="0.18"/><circle cx="56.2" cy="177.2" r="0.7" fill="#fff" opacity="0.08"/><circle cx="122.9" cy="685.7" r="0.7" fill="#fff" opacity="0.19"/><circle cx="725.8" cy="394.9" r="0.7" fill="#fff" opacity="0.07"/><circle cx="339.1" cy="39.8" r="0.7" fill="#fff" opacity="0.19"/><circle cx="210.8" cy="204.0" r="0.7" fill="#fff" opacity="0.20"/><circle cx="159.2" cy="653.2" r="0.7" fill="#fff" opacity="0.10"/><circle cx="527.9" cy="75.5" r="0.7" fill="#fff" opacity="0.19"/><circle cx="316.5" cy="244.3" r="0.7" fill="#fff" opacity="0.16"/><circle cx="471.2" cy="177.7" r="0.7" fill="#fff" opacity="0.07"/><circle cx="456.9" cy="17.5" r="0.7" fill="#fff" opacity="0.19"/><circle cx="272.9" cy="120.1" r="0.7" fill="#fff" opacity="0.10"/><circle cx="90.4" cy="224.2" r="0.7" fill="#fff" opacity="0.14"/><circle cx="323.1" cy="236.6" r="0.7" fill="#fff" opacity="0.10"/><circle cx="386.3" cy="551.3" r="0.7" fill="#fff" opacity="0.12"/><circle cx="609.7" cy="341.7" r="0.7" fill="#fff" opacity="0.07"/><circle cx="135.2" cy="600.1" r="0.7" fill="#fff" opacity="0.13"/><circle cx="303.7" cy="365.1" r="0.7" fill="#fff" opacity="0.19"/><circle cx="298.0" cy="256.0" r="0.7" fill="#fff" opacity="0.11"/><circle cx="8.6" cy="385.7" r="0.7" fill="#fff" opacity="0.13"/><circle cx="393.7" cy="319.7" r="0.7" fill="#fff" opacity="0.13"/><circle cx="568.1" cy="131.8" r="0.7" fill="#fff" opacity="0.20"/><circle cx="91.0" cy="613.4" r="0.7" fill="#fff" opacity="0.08"/><circle cx="631.4" cy="184.4" r="0.7" fill="#fff" opacity="0.06"/><circle cx="429.3" cy="594.0" r="0.7" fill="#fff" opacity="0.19"/><circle cx="696.3" cy="693.6" r="0.7" fill="#fff" opacity="0.05"/><circle cx="301.0" cy="75.7" r="0.7" fill="#fff" opacity="0.17"/><circle cx="358.5" cy="526.8" r="0.7" fill="#fff" opacity="0.17"/><circle cx="793.2" cy="479.2" r="0.7" fill="#fff" opacity="0.19"/><circle cx="435.5" cy="57.1" r="0.7" fill="#fff" opacity="0.19"/><circle cx="72.3" cy="60.7" r="0.7" fill="#fff" opacity="0.18"/><circle cx="222.8" cy="469.0" r="0.7" fill="#fff" opacity="0.05"/><circle cx="167.4" cy="506.7" r="0.7" fill="#fff" opacity="0.05"/><circle cx="405.4" cy="663.7" r="0.7" fill="#fff" opacity="0.08"/><circle cx="559.6" cy="526.6" r="0.7" fill="#fff" opacity="0.15"/><circle cx="608.5" cy="494.3" r="0.7" fill="#fff" opacity="0.05"/><circle cx="152.3" cy="379.8" r="0.7" fill="#fff" opacity="0.20"/><circle cx="172.3" cy="415.5" r="0.7" fill="#fff" opacity="0.07"/><circle cx="672.4" cy="315.2" r="0.7" fill="#fff" opacity="0.13"/><circle cx="531.5" cy="96.7" r="0.7" fill="#fff" opacity="0.17"/><circle cx="635.1" cy="608.6" r="0.7" fill="#fff" opacity="0.10"/><circle cx="186.1" cy="116.8" r="0.7" fill="#fff" opacity="0.19"/><circle cx="347.8" cy="276.0" r="0.7" fill="#fff" opacity="0.13"/><circle cx="554.6" cy="225.2" r="0.7" fill="#fff" opacity="0.10"/><circle cx="608.4" cy="549.9" r="0.7" fill="#fff" opacity="0.10"/><circle cx="58.5" cy="657.1" r="0.7" fill="#fff" opacity="0.17"/><circle cx="471.8" cy="286.5" r="0.7" fill="#fff" opacity="0.20"/><circle cx="341.9" cy="153.3" r="0.7" fill="#fff" opacity="0.07"/><circle cx="278.7" cy="425.3" r="0.7" fill="#fff" opacity="0.11"/><circle cx="752.0" cy="460.1" r="0.7" fill="#fff" opacity="0.12"/><circle cx="524.3" cy="426.0" r="0.7" fill="#fff" opacity="0.15"/><circle cx="393.2" cy="370.3" r="0.7" fill="#fff" opacity="0.13"/><circle cx="660.1" cy="135.8" r="0.7" fill="#fff" opacity="0.17"/><circle cx="236.9" cy="600.9" r="0.7" fill="#fff" opacity="0.06"/><circle cx="385.1" cy="313.6" r="0.7" fill="#fff" opacity="0.16"/><circle cx="160.7" cy="185.8" r="0.7" fill="#fff" opacity="0.07"/><circle cx="445.8" cy="408.2" r="0.7" fill="#fff" opacity="0.05"/><circle cx="141.2" cy="141.3" r="0.7" fill="#fff" opacity="0.20"/><circle cx="361.3" cy="400.4" r="0.7" fill="#fff" opacity="0.10"/><circle cx="523.8" cy="575.6" r="0.7" fill="#fff" opacity="0.16"/><circle cx="1.2" cy="311.2" r="0.7" fill="#fff" opacity="0.13"/><circle cx="35.4" cy="559.3" r="0.7" fill="#fff" opacity="0.10"/><circle cx="232.9" cy="442.7" r="0.7" fill="#fff" opacity="0.14"/><circle cx="394.2" cy="608.4" r="0.7" fill="#fff" opacity="0.13"/><circle cx="272.5" cy="45.6" r="0.7" fill="#fff" opacity="0.14"/><circle cx="288.6" cy="379.9" r="0.7" fill="#fff" opacity="0.10"/><circle cx="5.5" cy="26.8" r="0.7" fill="#fff" opacity="0.07"/><circle cx="74.6" cy="602.8" r="0.7" fill="#fff" opacity="0.14"/><circle cx="189.4" cy="503.2" r="0.7" fill="#fff" opacity="0.15"/><circle cx="49.2" cy="531.9" r="0.7" fill="#fff" opacity="0.08"/><circle cx="791.9" cy="100.5" r="0.7" fill="#fff" opacity="0.10"/><circle cx="197.8" cy="610.4" r="0.7" fill="#fff" opacity="0.18"/><circle cx="460.0" cy="105.5" r="0.7" fill="#fff" opacity="0.12"/><circle cx="557.4" cy="41.0" r="0.7" fill="#fff" opacity="0.20"/><circle cx="668.0" cy="659.6" r="0.7" fill="#fff" opacity="0.16"/><circle cx="490.4" cy="690.3" r="0.7" fill="#fff" opacity="0.09"/><circle cx="242.6" cy="87.2" r="0.7" fill="#fff" opacity="0.08"/><circle cx="634.0" cy="67.4" r="0.7" fill="#fff" opacity="0.17"/><circle cx="314.6" cy="621.4" r="0.7" fill="#fff" opacity="0.17"/><circle cx="545.3" cy="598.3" r="0.7" fill="#fff" opacity="0.05"/><circle cx="210.8" cy="261.0" r="0.7" fill="#fff" opacity="0.12"/><circle cx="532.2" cy="622.5" r="0.7" fill="#fff" opacity="0.17"/><circle cx="737.4" cy="492.7" r="0.7" fill="#fff" opacity="0.11"/><circle cx="403.2" cy="530.0" r="0.7" fill="#fff" opacity="0.18"/><circle cx="293.7" cy="251.6" r="0.7" fill="#fff" opacity="0.15"/><circle cx="181.3" cy="625.1" r="0.7" fill="#fff" opacity="0.05"/><circle cx="515.1" cy="343.8" r="0.7" fill="#fff" opacity="0.08"/><circle cx="452.7" cy="335.7" r="0.7" fill="#fff" opacity="0.20"/><circle cx="702.4" cy="415.3" r="0.7" fill="#fff" opacity="0.19"/><circle cx="701.6" cy="116.9" r="0.7" fill="#fff" opacity="0.18"/><circle cx="661.7" cy="701.5" r="0.7" fill="#fff" opacity="0.17"/><circle cx="311.3" cy="146.1" r="0.7" fill="#fff" opacity="0.16"/><circle cx="167.3" cy="536.2" r="0.7" fill="#fff" opacity="0.14"/><circle cx="655.7" cy="252.4" r="0.7" fill="#fff" opacity="0.10"/><circle cx="718.1" cy="469.1" r="0.7" fill="#fff" opacity="0.11"/><circle cx="445.2" cy="308.4" r="0.7" fill="#fff" opacity="0.15"/><circle cx="410.3" cy="202.2" r="0.7" fill="#fff" opacity="0.20"/><circle cx="702.9" cy="537.1" r="0.7" fill="#fff" opacity="0.10"/><circle cx="154.2" cy="517.6" r="0.7" fill="#fff" opacity="0.18"/><circle cx="518.3" cy="151.2" r="0.7" fill="#fff" opacity="0.16"/><circle cx="415.4" cy="264.3" r="0.7" fill="#fff" opacity="0.14"/><circle cx="356.3" cy="459.3" r="0.7" fill="#fff" opacity="0.17"/><circle cx="780.3" cy="78.7" r="0.7" fill="#fff" opacity="0.14"/><circle cx="750.6" cy="465.2" r="0.7" fill="#fff" opacity="0.14"/><circle cx="677.3" cy="22.2" r="0.7" fill="#fff" opacity="0.17"/><circle cx="494.8" cy="413.6" r="0.7" fill="#fff" opacity="0.10"/><circle cx="491.7" cy="88.8" r="0.7" fill="#fff" opacity="0.13"/><circle cx="204.7" cy="659.6" r="0.7" fill="#fff" opacity="0.18"/><circle cx="375.4" cy="534.5" r="0.7" fill="#fff" opacity="0.11"/><circle cx="415.7" cy="114.3" r="0.7" fill="#fff" opacity="0.19"/><circle cx="606.7" cy="538.1" r="0.7" fill="#fff" opacity="0.06"/><circle cx="650.6" cy="8.5" r="0.7" fill="#fff" opacity="0.14"/><circle cx="387.3" cy="41.9" r="0.7" fill="#fff" opacity="0.11"/><circle cx="704.4" cy="442.0" r="0.7" fill="#fff" opacity="0.10"/><circle cx="646.6" cy="251.6" r="0.7" fill="#fff" opacity="0.19"/><circle cx="318.3" cy="54.9" r="0.7" fill="#fff" opacity="0.20"/><circle cx="56.4" cy="179.2" r="0.7" fill="#fff" opacity="0.17"/><circle cx="91.4" cy="385.2" r="0.7" fill="#fff" opacity="0.19"/><circle cx="468.4" cy="246.5" r="0.7" fill="#fff" opacity="0.17"/><circle cx="655.5" cy="410.2" r="0.7" fill="#fff" opacity="0.15"/><circle cx="256.0" cy="288.5" r="0.7" fill="#fff" opacity="0.21"/><circle cx="771.6" cy="1.2" r="0.7" fill="#fff" opacity="0.08"/><circle cx="178.9" cy="561.4" r="0.7" fill="#fff" opacity="0.08"/><circle cx="134.5" cy="542.2" r="0.7" fill="#fff" opacity="0.08"/><circle cx="776.0" cy="322.4" r="0.7" fill="#fff" opacity="0.19"/><circle cx="650.9" cy="146.7" r="0.7" fill="#fff" opacity="0.17"/><circle cx="329.5" cy="157.3" r="0.7" fill="#fff" opacity="0.05"/><circle cx="558.3" cy="397.2" r="0.7" fill="#fff" opacity="0.10"/><circle cx="661.2" cy="139.5" r="0.7" fill="#fff" opacity="0.12"/><circle cx="69.3" cy="248.1" r="0.7" fill="#fff" opacity="0.19"/><circle cx="397.1" cy="108.7" r="0.7" fill="#fff" opacity="0.08"/><circle cx="511.6" cy="196.6" r="0.7" fill="#fff" opacity="0.19"/><circle cx="48.1" cy="615.2" r="0.7" fill="#fff" opacity="0.15"/><circle cx="652.9" cy="250.8" r="0.7" fill="#fff" opacity="0.06"/><circle cx="136.7" cy="443.8" r="0.7" fill="#fff" opacity="0.05"/><circle cx="87.5" cy="553.9" r="0.7" fill="#fff" opacity="0.19"/><circle cx="679.8" cy="592.9" r="0.7" fill="#fff" opacity="0.14"/><circle cx="695.0" cy="493.9" r="0.7" fill="#fff" opacity="0.14"/><circle cx="338.0" cy="17.2" r="0.7" fill="#fff" opacity="0.06"/><circle cx="198.2" cy="326.3" r="0.7" fill="#fff" opacity="0.07"/><circle cx="770.6" cy="408.2" r="0.7" fill="#fff" opacity="0.17"/><circle cx="708.8" cy="160.2" r="0.7" fill="#fff" opacity="0.19"/><circle cx="760.7" cy="189.4" r="0.7" fill="#fff" opacity="0.07"/><circle cx="635.2" cy="630.0" r="0.7" fill="#fff" opacity="0.18"/><circle cx="324.2" cy="426.3" r="0.7" fill="#fff" opacity="0.07"/><circle cx="186.2" cy="296.6" r="0.7" fill="#fff" opacity="0.17"/><circle cx="70.5" cy="657.2" r="0.7" fill="#fff" opacity="0.05"/><circle cx="769.9" cy="167.8" r="0.7" fill="#fff" opacity="0.18"/><circle cx="649.5" cy="675.7" r="0.7" fill="#fff" opacity="0.13"/><circle cx="554.8" cy="206.8" r="0.7" fill="#fff" opacity="0.18"/><circle cx="86.4" cy="625.7" r="0.7" fill="#fff" opacity="0.14"/><circle cx="49.2" cy="666.5" r="0.7" fill="#fff" opacity="0.10"/><circle cx="54.1" cy="183.4" r="0.7" fill="#fff" opacity="0.05"/><circle cx="223.4" cy="502.6" r="0.7" fill="#fff" opacity="0.21"/><circle cx="501.3" cy="604.6" r="0.7" fill="#fff" opacity="0.18"/><circle cx="567.5" cy="272.1" r="0.7" fill="#fff" opacity="0.09"/><circle cx="123.9" cy="387.3" r="0.7" fill="#fff" opacity="0.08"/><circle cx="587.5" cy="226.9" r="0.7" fill="#fff" opacity="0.14"/><circle cx="433.9" cy="444.6" r="0.7" fill="#fff" opacity="0.07"/><circle cx="203.5" cy="487.6" r="0.7" fill="#fff" opacity="0.08"/><circle cx="533.2" cy="683.3" r="0.7" fill="#fff" opacity="0.11"/><circle cx="763.6" cy="434.9" r="0.7" fill="#fff" opacity="0.20"/><circle cx="417.8" cy="533.0" r="0.7" fill="#fff" opacity="0.16"/><circle cx="155.0" cy="366.7" r="0.7" fill="#fff" opacity="0.14"/><circle cx="368.1" cy="467.3" r="0.7" fill="#fff" opacity="0.20"/><circle cx="631.2" cy="575.1" r="0.7" fill="#fff" opacity="0.07"/><circle cx="558.3" cy="444.2" r="0.7" fill="#fff" opacity="0.20"/><circle cx="2.0" cy="122.1" r="0.7" fill="#fff" opacity="0.20"/><circle cx="295.7" cy="499.6" r="0.7" fill="#fff" opacity="0.14"/><circle cx="316.0" cy="310.5" r="0.7" fill="#fff" opacity="0.14"/><circle cx="782.3" cy="377.6" r="0.7" fill="#fff" opacity="0.17"/><circle cx="240.9" cy="503.9" r="0.7" fill="#fff" opacity="0.14"/><circle cx="590.3" cy="622.7" r="0.7" fill="#fff" opacity="0.06"/><circle cx="767.8" cy="432.0" r="0.7" fill="#fff" opacity="0.09"/><circle cx="368.7" cy="68.6" r="0.7" fill="#fff" opacity="0.08"/><circle cx="665.2" cy="503.5" r="0.7" fill="#fff" opacity="0.19"/><circle cx="128.9" cy="76.6" r="0.7" fill="#fff" opacity="0.11"/><circle cx="393.6" cy="503.3" r="0.7" fill="#fff" opacity="0.10"/><circle cx="585.4" cy="413.6" r="0.7" fill="#fff" opacity="0.10"/><circle cx="625.5" cy="52.2" r="0.7" fill="#fff" opacity="0.14"/><circle cx="149.1" cy="30.2" r="0.7" fill="#fff" opacity="0.13"/><circle cx="412.8" cy="433.7" r="0.7" fill="#fff" opacity="0.11"/><circle cx="738.0" cy="555.2" r="0.7" fill="#fff" opacity="0.07"/><circle cx="3.8" cy="680.1" r="0.7" fill="#fff" opacity="0.11"/><circle cx="83.3" cy="125.8" r="0.7" fill="#fff" opacity="0.16"/><circle cx="140.2" cy="264.1" r="0.7" fill="#fff" opacity="0.16"/><circle cx="449.6" cy="64.8" r="1.32" fill="#fff" opacity="0.85"/><circle cx="736.0" cy="30.9" r="0.99" fill="#fff" opacity="0.85"/><circle cx="727.7" cy="76.0" r="0.91" fill="#fff" opacity="0.6"/><circle cx="402.5" cy="284.9" r="1.16" fill="#fff" opacity="0.85"/><circle cx="707.7" cy="181.2" r="0.99" fill="#fff" opacity="0.85"/><circle cx="673.4" cy="206.9" r="0.83" fill="#fff" opacity="0.6"/><circle cx="551.0" cy="174.8" r="0.83" fill="#fff" opacity="0.6"/><circle cx="467.0" cy="351.0" r="0.91" fill="#fff" opacity="0.6"/><circle cx="458.7" cy="212.0" r="0.83" fill="#fff" opacity="0.6"/><circle cx="421.7" cy="310.0" r="0.83" fill="#fff" opacity="0.6"/><circle cx="694.0" cy="6.4" r="0.83" fill="#fff" opacity="0.6"/><circle cx="536.0" cy="100.6" r="0.75" fill="#fff" opacity="0.6"/><circle cx="404.0" cy="80.0" r="0.75" fill="#fff" opacity="0.6"/><circle cx="618.0" cy="227.2" r="0.75" fill="#fff" opacity="0.6"/><circle cx="471.8" cy="155.6" r="0.75" fill="#fff" opacity="0.6"/><circle cx="381.7" cy="454.8" r="1.16" fill="#fff" opacity="0.85"/><circle cx="381.3" cy="471.9" r="0.91" fill="#fff" opacity="0.6"/><circle cx="384.4" cy="474.9" r="0.83" fill="#fff" opacity="0.6"/><circle cx="349.5" cy="363.2" r="0.91" fill="#fff" opacity="0.6"/><circle cx="284.4" cy="603.7" r="1.07" fill="#fff" opacity="0.85"/><circle cx="52.2" cy="501.0" r="0.91" fill="#fff" opacity="0.6"/><circle cx="173.4" cy="386.6" r="0.83" fill="#fff" opacity="0.6"/><circle cx="354.8" cy="516.6" r="0.83" fill="#fff" opacity="0.6"/><circle cx="5.2" cy="390.4" r="0.75" fill="#fff" opacity="0.6"/><circle cx="143.0" cy="510.9" r="0.75" fill="#fff" opacity="0.6"/><circle cx="22.0" cy="610.0" r="0.75" fill="#fff" opacity="0.6"/><circle cx="168.0" cy="642.3" r="0.75" fill="#fff" opacity="0.6"/><circle cx="12.4" cy="556.3" r="0.75" fill="#fff" opacity="0.6"/><circle cx="556.4" cy="540.9" r="1.40" fill="#fff" opacity="0.85"/><circle cx="607.2" cy="434.8" r="0.99" fill="#fff" opacity="0.85"/><circle cx="529.5" cy="496.5" r="0.83" fill="#fff" opacity="0.6"/><circle cx="663.3" cy="502.6" r="0.83" fill="#fff" opacity="0.6"/><circle cx="731.5" cy="442.4" r="0.83" fill="#fff" opacity="0.6"/><circle cx="789.4" cy="366.2" r="0.83" fill="#fff" opacity="0.6"/><circle cx="478.7" cy="531.0" r="0.83" fill="#fff" opacity="0.6"/><circle cx="601.9" cy="557.5" r="0.83" fill="#fff" opacity="0.6"/><circle cx="466.6" cy="351.4" r="0.75" fill="#fff" opacity="0.6"/><circle cx="683.7" cy="684.9" r="0.83" fill="#fff" opacity="0.6"/><circle cx="574.2" cy="702.3" r="0.83" fill="#fff" opacity="0.6"/><circle cx="580.3" cy="664.8" r="0.75" fill="#fff" opacity="0.6"/><circle cx="767.5" cy="448.4" r="0.75" fill="#fff" opacity="0.6"/><circle cx="202.9" cy="38.5" r="1.24" fill="#fff" opacity="0.85"/><circle cx="262.4" cy="68.0" r="0.83" fill="#fff" opacity="0.6"/><circle cx="123.4" cy="106.3" r="0.83" fill="#fff" opacity="0.6"/><circle cx="20.3" cy="119.2" r="0.83" fill="#fff" opacity="0.6"/><circle cx="124.5" cy="148.0" r="0.83" fill="#fff" opacity="0.6"/><circle cx="337.4" cy="142.3" r="0.91" fill="#fff" opacity="0.6"/><circle cx="378.0" cy="152.5" r="0.83" fill="#fff" opacity="0.6"/><circle cx="92.7" cy="204.4" r="0.83" fill="#fff" opacity="0.6"/><circle cx="231.0" cy="220.7" r="0.83" fill="#fff" opacity="0.6"/><circle cx="313.5" cy="229.8" r="0.83" fill="#fff" opacity="0.6"/><circle cx="330.6" cy="315.4" r="0.83" fill="#fff" opacity="0.6"/><circle cx="368.5" cy="315.4" r="1.16" fill="#fff" opacity="0.85"/><circle cx="332.0" cy="342.0" r="1.07" fill="#fff" opacity="0.85"/><circle cx="179.8" cy="265.8" r="0.75" fill="#fff" opacity="0.6"/><circle cx="39.7" cy="306.7" r="0.75" fill="#fff" opacity="0.6"/><circle cx="246.5" cy="135.5" r="0.75" fill="#fff" opacity="0.6"/><circle cx="214.0" cy="176.0" r="0.75" fill="#fff" opacity="0.6"/><circle cx="381.0" cy="440.0" r="0.75" fill="#fff" opacity="0.6"/><circle cx="378.0" cy="428.0" r="0.75" fill="#fff" opacity="0.6"/><circle cx="386.0" cy="458.0" r="0.75" fill="#fff" opacity="0.6"/><circle cx="377.0" cy="418.0" r="0.75" fill="#fff" opacity="0.6"/></svg>
  <!-- status bar -->
  <div class="a" style="left:2px;top:820px;width:988px;height:1px;background:#d6d1cd"></div>
  <div class="t g" style="left:10px;top:803px">Rouge</div>
  <div class="vl" style="left:64px;top:800px;height:20px;background:#e0dcd8"></div>
  <div class="t g" style="left:74px;top:803px;letter-spacing:-0.33px">x: 0891 y: 1051 = 12857</div>
  <div class="vl" style="left:237px;top:800px;height:20px;background:#e0dcd8"></div>
  <div class="t g" style="left:333px;top:803px">D:\temp\Siril\resultat.fit (canal 0)</div>
  <div class="vl" style="left:648px;top:800px;height:20px;background:#e0dcd8"></div>
  <div class="t g" style="left:741px;top:803px;letter-spacing:-0.2px">fwhm : aucune sélection</div>
  <!-- lower controls -->
  <div class="cb" style="left:5px;top:831px"></div>
  <div class="t g" style="left:25px;top:832px">tronquer</div>
  <div class="a" style="left:103px;top:837px;width:702px;height:4px;border-radius:2px;background:#e6e3e0;border:1px solid #d8d3cf"></div>
  <div class="a" style="left:103px;top:837px;width:672px;height:4px;border-radius:2px;background:#3584e4"></div>
  <div class="a" style="left:765px;top:829px;width:20px;height:20px;border-radius:50%;background:#f6f5f4;border:1px solid #cdc7c2"></div>
  <div class="t" style="left:826px;top:832px;letter-spacing:-0.5px">62827</div>
  <div class="cb" style="left:5px;top:867px"></div>
  <svg class="a" style="left:5px;top:867px" width="16" height="16"><polygon points="3.3,7.6 5.4,5.5 8.5,8.4 15.2,2 15.2,5.6 8.5,12.3" fill="#8e9192"/></svg>
  <svg class="a" style="left:0;top:0" width="60" height="900"><g fill="none" stroke-width="1.75"><path d="M35.6 870.26L40.33 865.53A4.2 4.2 0 0 1 46.27 871.47L40.57 877.17A4.2 4.2 0 0 1 34.63 877.17" stroke="#aaa994"/><path d="M39.17 872.83A4.2 4.2 0 0 0 33.23 872.83L27.63 878.43A4.2 4.2 0 0 0 33.57 884.37L38.2 879.74" stroke="#6e6d59"/></g></svg>
  <div class="a" style="left:103px;top:873px;width:702px;height:4px;border-radius:2px;background:#e6e3e0;border:1px solid #d8d3cf"></div>
  <div class="a" style="left:94px;top:865px;width:20px;height:20px;border-radius:50%;background:#f6f5f4;border:1px solid #cdc7c2"></div>
  <div class="t" style="left:826px;top:868px">0</div>
  <div class="btn" style="left:684px;top:903px;width:143px;height:38px"></div>
  <div class="t g" style="left:693px;top:915px">Linéaire</div>
  <svg class="a" style="left:806px;top:920px" width="11" height="6"><path d="M0 0H11L5.5 5.5Z" fill="#8b8e8f"/></svg>
  <div class="btn" style="left:848px;top:903px;width:60px;height:38px"></div>
  <div class="t g" style="left:857px;top:915px">1:2</div>
<svg class="a" style="left:0;top:0" width="990" height="950">
<defs>
 <clipPath id="cl1"><rect x="580" y="900" width="25" height="40"/></clipPath>
 <clipPath id="cr1"><rect x="605" y="900" width="25" height="40"/></clipPath>
 <clipPath id="cl2"><rect x="630" y="900" width="23" height="40"/></clipPath>
 <clipPath id="cr2"><rect x="653" y="900" width="23" height="40"/></clipPath>
 <clipPath id="d1"><polygon points="275.4,910 287.8,922.5 275.5,934.7 263.2,922.4"/></clipPath>
 <clipPath id="d2"><polygon points="323.4,909 335.8,921.5 323.4,934 311,921.5"/></clipPath>
 <clipPath id="ph"><rect x="0" y="0" width="19" height="20"/></clipPath>
 <g id="pic"><rect x="0" y="0" width="19" height="20" fill="#3d4562"/><circle cx="4.6" cy="5" r="2.3" fill="#f6d04d"/>
  <polygon points="9.7,7.6 19,12.3 19,16.5 9.7,16.5" fill="#1d9a74"/><polygon points="0.5,16.5 7.2,10 13.1,16.5" fill="#25b389"/><polygon points="13.7,7.6 19,12.3 19,16.5 9.7,16.5 9.7,12" fill="#1d9a74"/></g>
</defs>
<!-- icon1 rotate left -->
<polygon points="275.4,910 287.8,922.5 275.5,934.7 263.2,922.4" fill="#3d4562"/>
<g clip-path="url(#d1)"><polygon points="276.6,918.2 282.3,917.6 286.2,920.6 278.4,928.4 276.6,923.5" fill="#1d9472"/><polygon points="273.9,924.3 281.6,923.8 286.2,920.6 273.3,933.5" fill="#26b48a"/></g>
<circle cx="269" cy="922.2" r="2" fill="#f4d24a"/>
<path d="M272.8 907.4Q265 909 261.6 915.8" fill="none" stroke="#444" stroke-width="1.5"/>
<polygon points="259.8,918.6 259.9,913.7 264,916.2" fill="#444"/>
<path d="M278.1 937.3Q286 935.5 288.8 928.3" fill="none" stroke="#444" stroke-width="1.5"/>
<polygon points="290,925.8 286.3,928.1 290.6,930" fill="#444"/>
<!-- icon2 rotate right -->
<polygon points="323.4,909 335.8,921.5 323.4,934 311,921.5" fill="#3d4562"/>
<g clip-path="url(#d2)"><polygon points="322.2,922.6 328,922.6 328,929.4 325.3,932 322.2,928.6" fill="#1d9472"/><polygon points="312,919 322.1,919.9 322.2,928.4 328,934" fill="#26b48a"/></g>
<polygon points="311,921.5 323.4,934 324.6,932.8 312.2,920.3" fill="#3d4562"/>
<circle cx="323.5" cy="915" r="2" fill="#f4d24a"/>
<path d="M326.3 907.3Q334 909 337.4 915.8" fill="none" stroke="#444" stroke-width="1.5"/>
<polygon points="338.6,918.3 338.6,913.6 334.6,916.2" fill="#444"/>
<path d="M320.8 936Q312.5 934.5 309.4 927.6" fill="none" stroke="#444" stroke-width="1.5"/>
<polygon points="308.4,924.6 307.8,929.4 312,927.4" fill="#444"/>
<!-- icon3 mirror x -->
<text x="0" y="0" transform="translate(361.2,919.2) scale(0.8,1)" font-family="Liberation Sans" font-weight="bold" font-size="17.5" fill="#0a6fc2" stroke="#0a6fc2" stroke-width="1.3" stroke-linejoin="round">R</text>
<text x="0" y="0" transform="translate(361.2,924.4) scale(0.8,-1)" font-family="Liberation Sans" font-weight="bold" font-size="17.5" fill="#8a2291" stroke="#8a2291" stroke-width="1.3" stroke-linejoin="round">R</text>
<rect x="357" y="921" width="27.8" height="2" fill="#3a3a3a"/>
<path d="M377.3 910.4Q382.5 920 377.9 931" fill="none" stroke="#444" stroke-width="1.4"/>
<polygon points="377.2,933.8 375.9,928.4 382,930.2" fill="#444"/>
<!-- icon4 mirror y -->
<text x="0" y="0" transform="translate(405.9,933.4) scale(0.8,1)" font-family="Liberation Sans" font-weight="bold" font-size="18.5" fill="#0a6fc2" stroke="#0a6fc2" stroke-width="1.3" stroke-linejoin="round">R</text>
<text x="0" y="0" transform="translate(432.2,933.4) scale(-0.8,1)" font-family="Liberation Sans" font-weight="bold" font-size="18.5" fill="#8a2291" stroke="#8a2291" stroke-width="1.3" stroke-linejoin="round">R</text>
<rect x="418" y="908.3" width="2" height="27.4" fill="#3a3a3a"/>
<path d="M407.4 915.5Q418.9 908.5 428.8 914.4" fill="none" stroke="#444" stroke-width="1.4"/>
<polygon points="431.2,915.4 427.3,910.7 425.5,916.2" fill="#444"/>
<!-- separators -->
<rect x="450" y="897" width="1" height="50" fill="#dcd8d4"/>
<rect x="512" y="897" width="1" height="50" fill="#dcd8d4"/>
<rect x="574" y="897" width="1" height="50" fill="#dcd8d4"/>
<rect x="840" y="897" width="1" height="50" fill="#dcd8d4"/>
<!-- histogram -->
<rect x="465" y="906" width="2" height="32" fill="#86a3b1"/><rect x="465" y="936" width="32" height="2" fill="#86a3b1"/>
<path d="M469.7 933.2C474 931 474.5 917 479 916.7C484 916.5 484 930 488.4 933.2" fill="none" stroke="#ef6a4b" stroke-width="1.9" stroke-linecap="round"/>
<path d="M480.6 933.2C486 931 487 913 493.7 911.7C495.5 911.5 496.2 913 496.2 915.9" fill="none" stroke="#7fb287" stroke-width="1.9" stroke-linecap="round"/>
<path d="M477.7 933.2C483 931 482 908.7 487 908.7C492 908.7 491 931 496.2 933.2" fill="none" stroke="#4b9be0" stroke-width="1.9" stroke-linecap="round"/>
<!-- stack -->
<g transform="translate(538,916)"><rect x="-0.5" y="-0.5" width="20" height="21" fill="#fff"/><g clip-path="url(#ph)"><use href="#pic"/></g></g>
<g transform="translate(535,913)"><rect x="-0.5" y="-0.5" width="20" height="21" fill="#fff"/><g clip-path="url(#ph)"><use href="#pic"/></g></g>
<g transform="translate(532,910)"><rect x="-0.5" y="-0.5" width="20" height="21" fill="#fff"/><g clip-path="url(#ph)"><use href="#pic"/></g></g>
<g transform="translate(529,907)"><rect x="-0.5" y="-0.5" width="20" height="21" fill="#fff"/><g clip-path="url(#ph)"><use href="#pic"/></g></g>
<!-- star icon 1 -->
<rect x="589" y="906" width="32" height="32" rx="4.5" fill="#fff"/>
<path d="M593.5 906H605V938H593.5A4.5 4.5 0 0 1 589 933.5V910.5A4.5 4.5 0 0 1 593.5 906Z" fill="#363636"/>
<g clip-path="url(#cl1)"><polygon points="605.00,912.50 608.23,918.35 614.80,919.62 610.23,924.50 611.05,931.13 605.00,928.30 598.95,931.13 599.77,924.50 595.20,919.62 601.77,918.35" fill="none" stroke="#fff" stroke-width="3.4" stroke-linejoin="round"/></g>
<g clip-path="url(#cr1)"><polygon points="605.00,912.50 608.23,918.35 614.80,919.62 610.23,924.50 611.05,931.13 605.00,928.30 598.95,931.13 599.77,924.50 595.20,919.62 601.77,918.35" fill="none" stroke="#363636" stroke-width="3.4" stroke-linejoin="round"/></g>
<!-- star icon 2 -->
<rect x="637" y="906" width="32" height="32" rx="4.5" fill="#2742d8"/>
<path d="M641.5 906H653V938H641.5A4.5 4.5 0 0 1 637 933.5V910.5A4.5 4.5 0 0 1 641.5 906Z" fill="#232d3b"/>
<g clip-path="url(#cl2)"><polygon points="653.00,912.50 656.23,918.35 662.80,919.62 658.23,924.50 659.05,931.13 653.00,928.30 646.95,931.13 647.77,924.50 643.20,919.62 649.77,918.35" fill="#e3d867" stroke="#f2f2f2" stroke-width="3.4" stroke-linejoin="round"/></g>
<g clip-path="url(#cr2)"><polygon points="653.00,912.50 656.23,918.35 662.80,919.62 658.23,924.50 659.05,931.13 653.00,928.30 646.95,931.13 647.77,924.50 643.20,919.62 649.77,918.35" fill="#f46e6e" stroke="#7ddc52" stroke-width="3.4" stroke-linejoin="round"/></g>
</svg>
  <div class="a" style="left:974px;top:0;width:16px;height:950px;background:linear-gradient(90deg,rgba(0,0,0,0),rgba(0,0,0,0.07))"></div>
</div>

<!-- DESKTOP -->
<div class="a" style="left:1419px;top:841px;width:143px;height:109px;background:#212121"></div>
<div class="a" style="left:1467px;top:841px;width:30px;height:109px;background:#1b1b1b"></div>
<div class="a" style="left:1419px;top:841px;width:38px;height:64px;background:#040902;overflow:hidden">
 <div class="a" style="left:0;top:0;width:38px;height:36px;background:linear-gradient(180deg,#0c1a10,#0f2216 60%,#08120a)"></div>
 <div class="a" style="left:1px;top:22px;width:18px;height:12px;background:#0f2c2a;opacity:0.9"></div>
 <div class="a" style="left:1px;top:31px;width:18px;height:2px;background:#1e4a48"></div>
 <div class="a" style="left:2px;top:39px;width:20px;height:2px;background:#1a2a10"></div>
 <div class="a" style="left:3px;top:18px;width:4px;height:3px;background:#7a3040;border-radius:50%"></div>
 <div class="a" style="left:32px;top:20px;width:6px;height:3px;background:#3a5038;border-radius:50%"></div>
</div>
<div class="a" style="left:1507px;top:841px;width:55px;height:100px;overflow:hidden;background:#0a4a22">
 <div class="a" style="left:0;top:0;width:55px;height:100px;background:linear-gradient(90deg,#a9b9cc 0,#9fb3c9 12px,#5f8aa0 18px,#1d5a4e 24px,#0b5228 30px,#0a4f22 44px,#1b6a5e 55px)"></div>
 <div class="a" style="left:0;top:0;width:55px;height:18px;background:linear-gradient(180deg,#c2c6ca 0,#b8bec4 8px,rgba(120,140,130,0.3) 18px)"></div>
 <div class="a" style="left:0;top:12px;width:10px;height:22px;background:radial-gradient(ellipse at 40% 50%,#c9505e 0,rgba(200,80,90,0.4) 60%,rgba(0,0,0,0) 100%)"></div>
 <div class="a" style="left:40px;top:28px;width:18px;height:16px;border-radius:50%;background:radial-gradient(#5aa6b8 0,rgba(80,150,170,0.5) 60%,rgba(0,0,0,0) 100%)"></div>
 <div class="a" style="left:44px;top:60px;width:16px;height:26px;border-radius:50%;background:radial-gradient(#4f9aaa 0,rgba(70,140,160,0.5) 60%,rgba(0,0,0,0) 100%)"></div>
</div>
<!-- RIGHT DIALOG -->
<div id="dlg" class="a" style="left:994px;top:0;width:568px;height:841px;background:#f6f5f4;overflow:hidden">
  <div class="a" style="left:0;top:0;width:568px;height:28px;background:#fff"></div>
  <svg class="a" style="left:3px;top:2px" width="20" height="14"><use href="#logo"/></svg>
  <div class="t" style="left:28px;top:5px;color:#8a8a8a">Étalonnage des couleurs par photométrie</div>
  <div class="a" style="left:415px;top:11px;width:12px;height:1px;background:#858585"></div>
  <div class="a" style="left:473px;top:6px;width:12px;height:12px;border:1px solid #e6e6e6"></div>
  <svg class="a" style="left:532px;top:6px" width="12" height="12"><path d="M0.5 0.5L11.5 11.5M11.5 0.5L0.5 11.5" stroke="#858585" stroke-width="1.1"/></svg>
</div>
<div id="dc">
  <!-- section 1 -->
  <svg class="a" style="left:1004px;top:48px" width="10" height="6"><path d="M0 0H10L5 5.5Z" fill="#8b8e8f"/></svg>
  <div class="t b g" style="left:1017px;top:43px;font-size:14.6px">Paramètres de l'Image</div>
  <div class="ent" style="left:1001px;top:60px;width:168px;height:34px"></div>
  <svg class="a" style="left:1011px;top:71px" width="14" height="14"><circle cx="5.5" cy="5.5" r="4.3" fill="none" stroke="#8b8e8f" stroke-width="1.7"/><path d="M8.6 8.6L13 13" stroke="#8b8e8f" stroke-width="2"/></svg>
  <div class="t" style="left:1032px;top:70px">alnitak</div>
  <svg class="a" style="left:1144px;top:71px" width="16" height="12"><path d="M4.5 0H15a1 1 0 0 1 1 1V11a1 1 0 0 1-1 1H4.5L0 6Z" fill="#8b8e8f"/><path d="M7.5 3.5L12 8.5M12 3.5L7.5 8.5" stroke="#fcfcfc" stroke-width="1.8"/></svg>
  <div class="btn" style="left:1169px;top:60px;width:116px;height:34px"></div>
  <svg class="a" style="left:1181px;top:70px" width="17" height="17"><circle cx="7" cy="6.8" r="3.6" fill="#eeeeee"/><circle cx="7" cy="6.8" r="5.2" fill="none" stroke="#5050b8" stroke-width="3.2"/><circle cx="7" cy="6.8" r="6.7" fill="none" stroke="#2a3a9a" stroke-width="0.8"/><circle cx="7" cy="6.8" r="3.7" fill="none" stroke="#1e2a70" stroke-width="0.7"/><path d="M11.6 11.6L15.2 15" stroke="#2a2a2a" stroke-width="3" stroke-linecap="round"/></svg>
  <div class="t g" style="left:1199px;top:70px;letter-spacing:-0.55px">Rechercher</div>

  <div class="t g" style="left:1024px;top:104px">Ascension droite :</div>
  <div class="t g" style="left:1041px;top:138px">Déclinaison :</div>
  <div class="ent" style="left:1169px;top:94px;width:116px;height:34px;background:#fcfcfc;border-color:#cdc7c2"></div><div class="vl" style="left:1214px;top:95px;height:32px;background:#ebe8e5"></div><div class="vl" style="left:1249px;top:95px;height:32px;background:#ebe8e5"></div><div class="t" style="left:1178px;top:104px;color:#2e3436">5</div><div class="a" style="left:1227px;top:110px;width:10px;height:2px;background:#8e9192"></div><div class="a" style="left:1262px;top:110px;width:10px;height:2px;background:#8e9192"></div><div class="a" style="left:1266px;top:106px;width:2px;height:10px;background:#8e9192"></div>
<div class="ent" style="left:1285px;top:94px;width:116px;height:34px;background:#fcfcfc;border-color:#cdc7c2"></div><div class="vl" style="left:1330px;top:95px;height:32px;background:#ebe8e5"></div><div class="vl" style="left:1365px;top:95px;height:32px;background:#ebe8e5"></div><div class="t" style="left:1294px;top:104px;color:#2e3436">40</div><div class="a" style="left:1343px;top:110px;width:10px;height:2px;background:#8e9192"></div><div class="a" style="left:1378px;top:110px;width:10px;height:2px;background:#8e9192"></div><div class="a" style="left:1382px;top:106px;width:2px;height:10px;background:#8e9192"></div>
<div class="ent" style="left:1401px;top:94px;width:74px;height:34px"></div><div class="t" style="left:1410px;top:104px;letter-spacing:-0.45px">45.5267</div>
<div class="ent" style="left:1169px;top:128px;width:116px;height:34px;background:#fcfcfc;border-color:#cdc7c2"></div><div class="vl" style="left:1214px;top:129px;height:32px;background:#ebe8e5"></div><div class="vl" style="left:1249px;top:129px;height:32px;background:#ebe8e5"></div><div class="t" style="left:1178px;top:138px;color:#2e3436">1</div><div class="a" style="left:1227px;top:144px;width:10px;height:2px;background:#8e9192"></div><div class="a" style="left:1262px;top:144px;width:10px;height:2px;background:#8e9192"></div><div class="a" style="left:1266px;top:140px;width:2px;height:10px;background:#8e9192"></div>
<div class="ent" style="left:1285px;top:128px;width:116px;height:34px;background:#fcfcfc;border-color:#cdc7c2"></div><div class="vl" style="left:1330px;top:129px;height:32px;background:#ebe8e5"></div><div class="vl" style="left:1365px;top:129px;height:32px;background:#ebe8e5"></div><div class="t" style="left:1294px;top:138px;color:#2e3436">56</div><div class="a" style="left:1343px;top:144px;width:10px;height:2px;background:#8e9192"></div><div class="a" style="left:1378px;top:144px;width:10px;height:2px;background:#8e9192"></div><div class="a" style="left:1382px;top:140px;width:2px;height:10px;background:#8e9192"></div>
<div class="ent" style="left:1401px;top:128px;width:74px;height:34px"></div><div class="t" style="left:1410px;top:138px;letter-spacing:-0.45px">33.2649</div>
<div class="ent" style="left:1184px;top:489px;width:118px;height:34px;background:#f9f8f7;border-color:#dedad6"></div><div class="vl" style="left:1232px;top:490px;height:32px;background:#ebe8e5"></div><div class="vl" style="left:1266px;top:490px;height:32px;background:#ebe8e5"></div><div class="t" style="left:1193px;top:498px;color:#c9c7c5">25</div><div class="a" style="left:1244px;top:505px;width:10px;height:2px;background:#d5d3d1"></div><div class="a" style="left:1279px;top:505px;width:10px;height:2px;background:#d5d3d1"></div><div class="a" style="left:1283px;top:501px;width:2px;height:10px;background:#d5d3d1"></div>

  <div class="cb" style="left:1479px;top:137px"></div>
  <svg class="a" style="left:1479px;top:137px" width="16" height="16"><polygon points="3.3,7.6 5.4,5.5 8.5,8.4 15.2,2 15.2,5.6 8.5,12.3" fill="#8e9192"/></svg>
  <div class="t g" style="left:1499px;top:138px">S</div>

  <!-- list -->
  <div class="a" style="left:1001px;top:162px;width:510px;height:140px;background:#fcfcfc;border:1px solid #cdc7c2"></div>
  <div class="vl" style="left:1060px;top:163px;height:25px;background:#eeebe8"></div>
  <div class="t b g" style="left:1008px;top:168px;font-size:14.3px">Base</div>
  <div class="t b g" style="left:1067px;top:168px;font-size:14.3px">Nom</div>
  <div class="a" style="left:1002px;top:188px;width:508px;height:26px;background:#3584e4"></div>
  <div class="t" style="left:1006px;top:194px;color:#fff">Simbad</div>
  <div class="t" style="left:1065px;top:194px;color:#fff">Alnitak</div>
  <div class="a" style="left:1001px;top:312px;width:510px;height:1px;background:#dcd8d4"></div>

  <div class="t g" style="left:1008px;top:333px">Longueur focale (mm) :</div>
  <div class="ent" style="left:1169px;top:323px;width:98px;height:34px"></div>
  <div class="t" style="left:1178px;top:333px">24.0</div>
  <div class="t g" style="left:1019px;top:367px">Pixel dim. (micron) :</div>
  <div class="ent" style="left:1169px;top:357px;width:98px;height:34px"></div>
  <div class="t" style="left:1178px;top:367px">6.55</div>
  <div class="t g" style="left:1320px;top:350px">Résolution :</div>
  <div class="t" style="left:1404px;top:350px">56.293</div>
  <div class="btn" style="left:1001px;top:391px;width:252px;height:34px"></div>
  <div class="t g" style="left:1018px;top:401px">Obtenir Métadonnées de l'Image</div>

  <!-- catalogue -->
  <svg class="a" style="left:1004px;top:443px" width="10" height="6"><path d="M0 0H10L5 5.5Z" fill="#8b8e8f"/></svg>
  <div class="t b g" style="left:1017px;top:438px;font-size:14.6px">Paramètres du catalogue</div>
  <div class="t g" style="left:1001px;top:465px">Catalogue photométrique :</div>
  <div class="btn" style="left:1184px;top:456px;width:118px;height:33px"></div>
  <div class="t g" style="left:1196px;top:465px">NOMAD</div>
  <svg class="a" style="left:1278px;top:470px" width="10" height="6"><path d="M0 0H10L5 5.5Z" fill="#8b8e8f"/></svg>
  <div class="t g" style="left:1001px;top:499px">Magnitude limite :</div>
  <div class="cb" style="left:1306px;top:499px"></div>
  <svg class="a" style="left:1306px;top:499px" width="16" height="16"><polygon points="3.3,7.6 5.4,5.5 8.5,8.4 15.2,2 15.2,5.6 8.5,12.3" fill="#8e9192"/></svg>
  <div class="t g" style="left:1326px;top:499px">Auto</div>

  <svg class="a" style="left:1004px;top:541px" width="10" height="6"><path d="M0 0H10L5 5.5Z" fill="#8b8e8f"/></svg>
  <div class="t b g" style="left:1017px;top:536px;font-size:14.6px">Détection d'étoiles</div>
  <div class="cb" style="left:1005px;top:557px"></div>
  <div class="t g" style="left:1025px;top:558px">Détection manuelle</div>

  <svg class="a" style="left:1004px;top:595px" width="10" height="6"><path d="M0 0H10L5 5.5Z" fill="#8b8e8f"/></svg>
  <div class="t b g" style="left:1017px;top:590px;font-size:14.6px">Référence de fond du ciel</div>
  <div class="cb" style="left:1005px;top:611px"></div>
  <svg class="a" style="left:1005px;top:611px" width="16" height="16"><polygon points="3.3,7.6 5.4,5.5 8.5,8.4 15.2,2 15.2,5.6 8.5,12.3" fill="#8e9192"/></svg>
  <div class="t g" style="left:1025px;top:612px">Auto-détection</div>
  <div class="t" style="left:1079px;top:634px;color:#c9c7c5">Zone sélectionnée</div>
  <div class="ent" style="left:1001px;top:656px;width:136px;height:34px;background:#f9f8f7;border-color:#dedad6"></div><div class="vl" style="left:1067px;top:657px;height:32px;background:#ebe8e5"></div><div class="vl" style="left:1102px;top:657px;height:32px;background:#ebe8e5"></div><div class="t" style="left:1010px;top:666px;color:#c9c7c5">0</div><div class="a" style="left:1079px;top:672px;width:10px;height:2px;background:#d5d3d1"></div><div class="a" style="left:1115px;top:672px;width:10px;height:2px;background:#d5d3d1"></div><div class="a" style="left:1118px;top:668px;width:2px;height:10px;background:#d5d3d1"></div>
<div class="ent" style="left:1142px;top:656px;width:136px;height:34px;background:#f9f8f7;border-color:#dedad6"></div><div class="vl" style="left:1208px;top:657px;height:32px;background:#ebe8e5"></div><div class="vl" style="left:1243px;top:657px;height:32px;background:#ebe8e5"></div><div class="t" style="left:1151px;top:666px;color:#c9c7c5">0</div><div class="a" style="left:1221px;top:672px;width:10px;height:2px;background:#d5d3d1"></div><div class="a" style="left:1255px;top:672px;width:10px;height:2px;background:#d5d3d1"></div><div class="a" style="left:1260px;top:668px;width:2px;height:10px;background:#d5d3d1"></div>

  <div class="btn" style="left:1306px;top:663px;width:221px;height:34px;border-color:#dedad6"></div>
  <div class="t" style="left:1321px;top:673px;color:#c9c7c5">Utiliser la sélection courante</div>
  <div class="btn" style="left:1380px;top:800px;width:86px;height:34px"></div>
  <div class="t g" style="left:1398px;top:810px">Fermer</div>
  <div class="a" style="left:1470px;top:800px;width:85px;height:34px;background:#3584e4;border-radius:5px"></div>
  <div class="t" style="left:1489px;top:810px;color:#fff">Valider</div>
</div>
<div class="a" style="left:990px;top:0;width:4px;height:841px;background:linear-gradient(#262626 0,#262626 77px,#161616 77px)"></div>

<!-- POPUP -->
<div id="pop" class="a" style="left:882px;top:673px;width:538px;height:277px;background:#f6f5f4;border:1px solid #555;border-bottom:none;box-shadow:0 0 14px rgba(0,0,0,0.28)">
  <div class="a" style="left:0;top:0;width:536px;height:31px;background:#fff"></div>
  <svg class="a" style="left:3px;top:5px" width="20" height="14"><use href="#logo"/></svg>
  <svg class="a" style="left:509px;top:9px" width="12" height="12"><path d="M0.6 0.6L11.4 11.4M11.4 0.6L0.6 11.4" stroke="#111" stroke-width="1.2"/></svg>
  <div class="a" style="left:56px;top:38px;font-weight:bold;font-size:17.8px;line-height:25px;color:#2e3436;white-space:pre">La résolution astrométrique a échoué. L'image n'a
pas pu être alignée sur les étoiles de référence.</div>
  <div class="a" style="left:39px;top:97px;font-size:15px;line-height:20px;color:#2e3436;white-space:pre">Cela est généralement dû au fait que les paramètres initiaux (taille
des pixels, longueur focale, coordonnées initiales) sont trop éloignés
des métadonnées réelles de l'image.
Vous pouvez également essayer de chercher dans un autre catalogue.
Enfin, gardez à l'esprit que la résolution astrométrique devrait
seulement s'utiliser sur des images linéaires.</div>
  <div class="a" style="left:1px;top:243px;width:533px;height:40px;background:linear-gradient(#f6f5f4,#edebe9);border:1px solid #cdc7c2;border-radius:5px"></div>
  <div class="a" style="left:2px;top:245px;width:531px;height:36px;border:1px dotted #999;border-radius:3px;opacity:0.7"></div>
  <div class="t" style="left:245px;top:254px">Valider</div>
</div>

</body></html>
